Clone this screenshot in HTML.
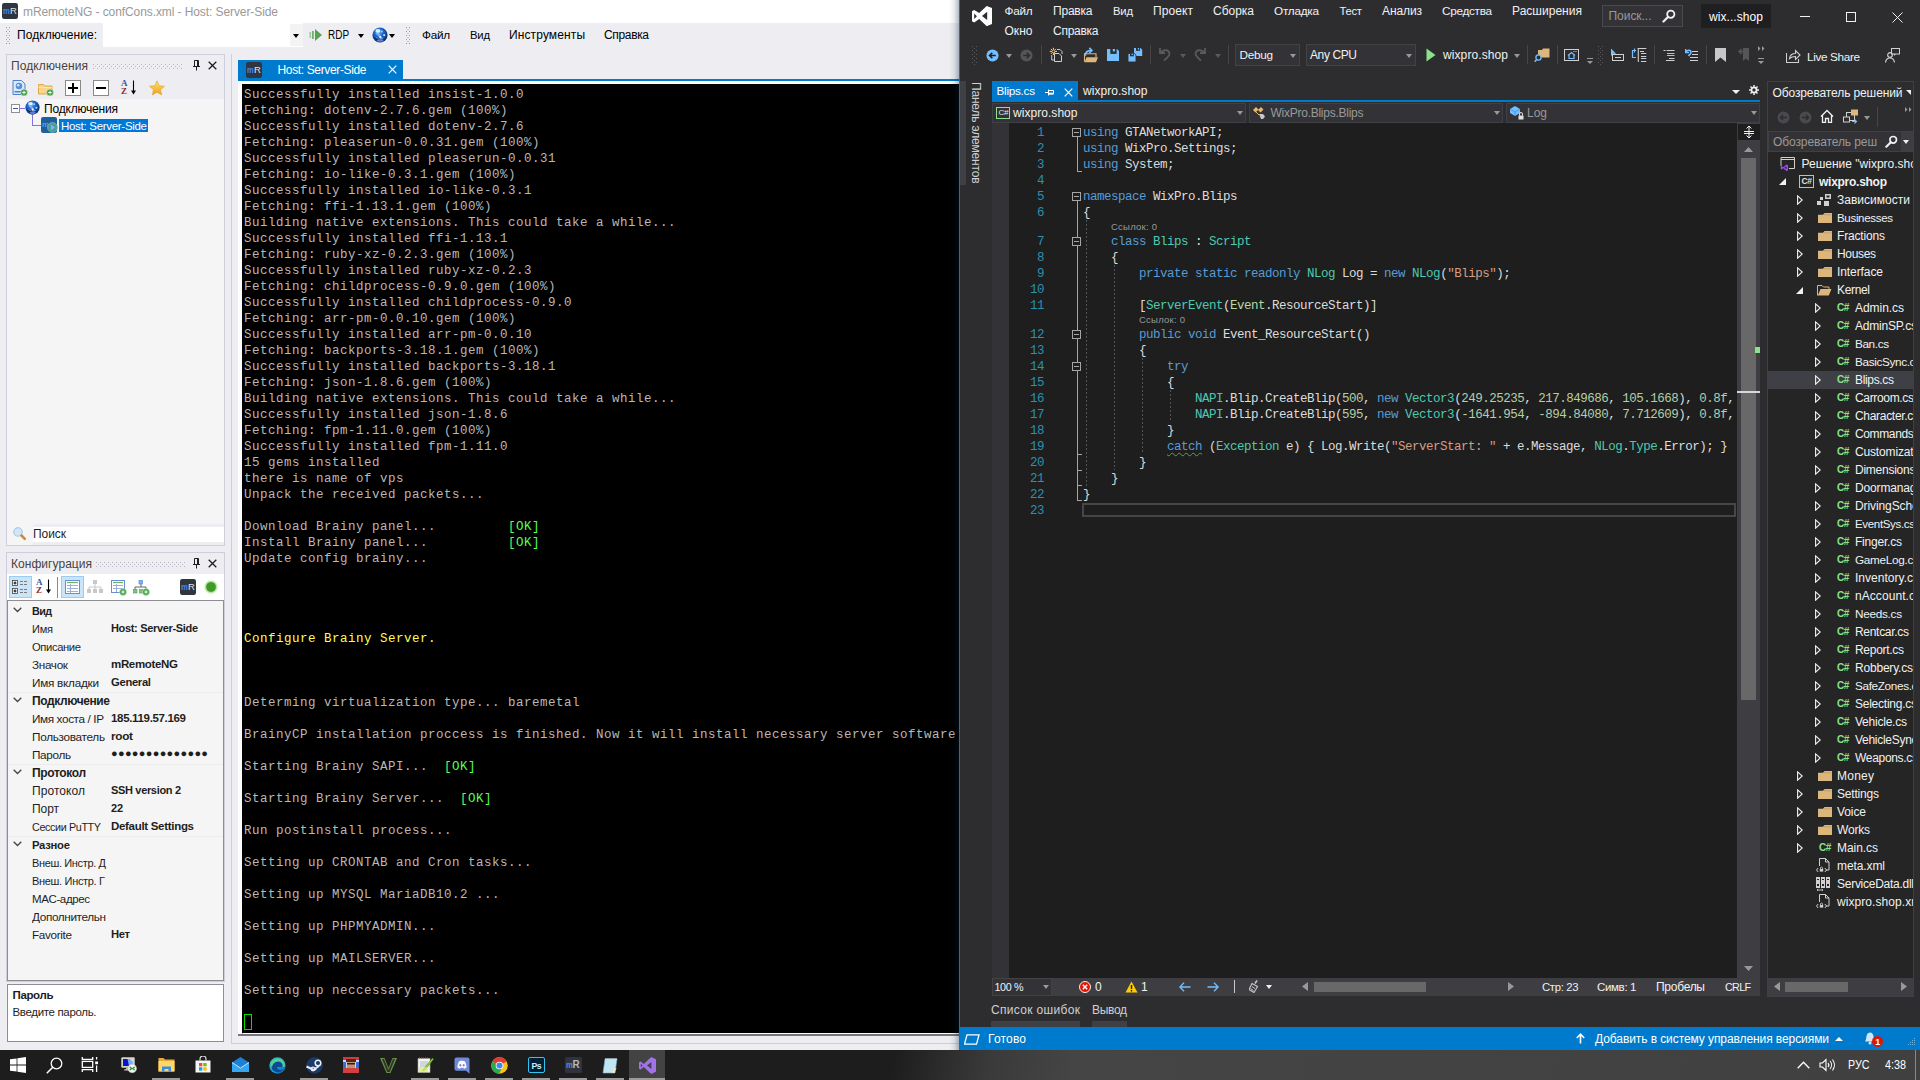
<!DOCTYPE html><html><head><meta charset="utf-8"><title>screen</title><style>
html,body{margin:0;padding:0;background:#2d2d30;overflow:hidden}
#r{position:relative;width:1920px;height:1080px;overflow:hidden;font-family:"Liberation Sans",sans-serif;font-size:12px}
#r div,#r span.t,#r svg,#r pre{position:absolute;box-sizing:border-box}
#r span.t{white-space:pre}
#r pre{margin:0}
#r pre b{font-weight:normal;color:#55ff55}
#r pre i{font-style:normal;color:#ffff55}
</style></head><body><div id="r">
<div style="left:0px;top:0px;width:959px;height:23px;background:#fff;"></div>
<div style="left:0px;top:23px;width:959px;height:1027px;background:#eeeef2;"></div>
<div style="left:2px;top:3px;width:16px;height:16px;background:#31353f;border-radius:2.2px"></div>
<span class="t" style="top:4px;font-size:9.5px;line-height:13px;color:#4a86f0;left:3.2px;font-weight:bold;transform:scaleX(.8);transform-origin:left;">m</span>
<span class="t" style="top:4px;font-size:9.5px;line-height:13px;color:#dfe3e8;left:9.9px;">R</span>
<span class="t" style="top:4px;font-size:12px;line-height:16px;color:#999;left:23px;letter-spacing:-0.087px;">mRemoteNG - confCons.xml - Host: Server-Side</span>
<div style="left:103px;top:23px;width:200px;height:24px;background:#fff;"></div>
<div style="left:290px;top:24px;width:13px;height:22px;background:#f3f3f4;"></div>
<svg style="left:6px;top:27px;" width="4" height="17" viewBox="0 0 4 17"><g fill="#9c9ca8"><rect x="0" y="0" width="1" height="1"/><rect x="3" y="0" width="1" height="1"/><rect x="1.500" y="2" width="1" height="1"/><rect x="0" y="4" width="1" height="1"/><rect x="3" y="4" width="1" height="1"/><rect x="1.500" y="6" width="1" height="1"/><rect x="0" y="8" width="1" height="1"/><rect x="3" y="8" width="1" height="1"/><rect x="1.500" y="10" width="1" height="1"/><rect x="0" y="12" width="1" height="1"/><rect x="3" y="12" width="1" height="1"/><rect x="1.500" y="14" width="1" height="1"/><rect x="0" y="16" width="1" height="1"/><rect x="3" y="16" width="1" height="1"/></g></svg>
<span class="t" style="top:27px;font-size:12px;line-height:16px;color:#000;left:17px;letter-spacing:0.053px;">Подключение:</span>
<div style="left:293px;top:34px;width:0;height:0;border-left:3.5px solid transparent;border-right:3.5px solid transparent;border-top:4px solid #000"></div>
<svg style="left:309px;top:28px;" width="14" height="14" viewBox="0 0 14 14"><rect x="0.5" y="4" width="1.6" height="6" fill="#9cc89c"/><rect x="3" y="3" width="1.8" height="8" fill="#6fb06f"/><path d="M6 1 L13 7 L6 13Z" fill="#57a257"/></svg>
<span class="t" style="top:27px;font-size:12px;line-height:16px;color:#000;left:327.5px;transform:scaleX(.83);transform-origin:left;">RDP</span>
<div style="left:358px;top:34px;width:0;height:0;border-left:3.5px solid transparent;border-right:3.5px solid transparent;border-top:4px solid #000"></div>
<svg style="left:372px;top:27px;" width="16" height="16" viewBox="0 0 16 16"><defs><radialGradient id="gg" cx="42%" cy="32%" r="68%"><stop offset="0" stop-color="#66aef2"/><stop offset="0.45" stop-color="#1864cc"/><stop offset="0.82" stop-color="#0c3c8a"/><stop offset="1" stop-color="#0a2858"/></radialGradient></defs><circle cx="8" cy="8" r="7.600" fill="url(#gg)"/><path d="M3.200 6.200C5.500 4.500 7.800 6.500 8.800 8.800C9.600 10.500 11 11 12 10.500C10.500 13 8 12.500 7 10.500C6 8.500 5 7.500 3.200 6.200Z" fill="#a8d4ff" opacity=".55"/><ellipse cx="5.900" cy="3.900" rx="2.500" ry="1.800" fill="#fff" opacity=".85"/><circle cx="9.800" cy="4.500" r="1" fill="#d4e8ff" opacity=".7"/><circle cx="12.200" cy="8.200" r="1.100" fill="#eef6ff" opacity=".8"/><circle cx="8.300" cy="10" r="1.100" fill="#fff" opacity=".9"/><path d="M1.800 10.500C3.500 10.300 5.500 11 7.500 12.300C6 13.500 3.500 13 1.800 10.500Z" fill="#06122c" opacity=".65"/><path d="M3.500 10.300L6.500 11.600" stroke="#c8d8f0" stroke-width="0.700" opacity=".7"/><ellipse cx="8.200" cy="13.500" rx="3.300" ry="1.300" fill="#8494ff" opacity=".7"/></svg>
<div style="left:389px;top:34px;width:0;height:0;border-left:3.5px solid transparent;border-right:3.5px solid transparent;border-top:4px solid #000"></div>
<svg style="left:406px;top:27px;" width="4" height="17" viewBox="0 0 4 17"><g fill="#9c9ca8"><rect x="0" y="0" width="1" height="1"/><rect x="3" y="0" width="1" height="1"/><rect x="1.500" y="2" width="1" height="1"/><rect x="0" y="4" width="1" height="1"/><rect x="3" y="4" width="1" height="1"/><rect x="1.500" y="6" width="1" height="1"/><rect x="0" y="8" width="1" height="1"/><rect x="3" y="8" width="1" height="1"/><rect x="1.500" y="10" width="1" height="1"/><rect x="0" y="12" width="1" height="1"/><rect x="3" y="12" width="1" height="1"/><rect x="1.500" y="14" width="1" height="1"/><rect x="0" y="16" width="1" height="1"/><rect x="3" y="16" width="1" height="1"/></g></svg>
<span class="t" style="top:27px;font-size:11.75px;line-height:15px;color:#000;left:422px;letter-spacing:-0.296px;">Файл</span>
<span class="t" style="top:28px;font-size:11.25px;line-height:14px;color:#000;left:470px;letter-spacing:-0.176px;">Вид</span>
<span class="t" style="top:27px;font-size:12px;line-height:16px;color:#000;left:509px;letter-spacing:0.118px;">Инструменты</span>
<span class="t" style="top:27px;font-size:12px;line-height:16px;color:#000;left:604px;letter-spacing:-0.346px;">Справка</span>
<div style="left:6px;top:54px;width:219px;height:492px;background:#eeeef2;border:1px solid #cccedb;"></div>
<span class="t" style="top:58px;font-size:12px;line-height:16px;color:#444;left:11px;letter-spacing:0.109px;">Подключения</span>
<svg style="left:93px;top:64px;" width="90" height="5" viewBox="0 0 90 5"><g fill="#b4b6c4"><rect x="0" y="0" width="1" height="1"/><rect x="4" y="0" width="1" height="1"/><rect x="8" y="0" width="1" height="1"/><rect x="12" y="0" width="1" height="1"/><rect x="16" y="0" width="1" height="1"/><rect x="20" y="0" width="1" height="1"/><rect x="24" y="0" width="1" height="1"/><rect x="28" y="0" width="1" height="1"/><rect x="32" y="0" width="1" height="1"/><rect x="36" y="0" width="1" height="1"/><rect x="40" y="0" width="1" height="1"/><rect x="44" y="0" width="1" height="1"/><rect x="48" y="0" width="1" height="1"/><rect x="52" y="0" width="1" height="1"/><rect x="56" y="0" width="1" height="1"/><rect x="60" y="0" width="1" height="1"/><rect x="64" y="0" width="1" height="1"/><rect x="68" y="0" width="1" height="1"/><rect x="72" y="0" width="1" height="1"/><rect x="76" y="0" width="1" height="1"/><rect x="80" y="0" width="1" height="1"/><rect x="84" y="0" width="1" height="1"/><rect x="88" y="0" width="1" height="1"/><rect x="2" y="2" width="1" height="1"/><rect x="6" y="2" width="1" height="1"/><rect x="10" y="2" width="1" height="1"/><rect x="14" y="2" width="1" height="1"/><rect x="18" y="2" width="1" height="1"/><rect x="22" y="2" width="1" height="1"/><rect x="26" y="2" width="1" height="1"/><rect x="30" y="2" width="1" height="1"/><rect x="34" y="2" width="1" height="1"/><rect x="38" y="2" width="1" height="1"/><rect x="42" y="2" width="1" height="1"/><rect x="46" y="2" width="1" height="1"/><rect x="50" y="2" width="1" height="1"/><rect x="54" y="2" width="1" height="1"/><rect x="58" y="2" width="1" height="1"/><rect x="62" y="2" width="1" height="1"/><rect x="66" y="2" width="1" height="1"/><rect x="70" y="2" width="1" height="1"/><rect x="74" y="2" width="1" height="1"/><rect x="78" y="2" width="1" height="1"/><rect x="82" y="2" width="1" height="1"/><rect x="86" y="2" width="1" height="1"/><rect x="0" y="4" width="1" height="1"/><rect x="4" y="4" width="1" height="1"/><rect x="8" y="4" width="1" height="1"/><rect x="12" y="4" width="1" height="1"/><rect x="16" y="4" width="1" height="1"/><rect x="20" y="4" width="1" height="1"/><rect x="24" y="4" width="1" height="1"/><rect x="28" y="4" width="1" height="1"/><rect x="32" y="4" width="1" height="1"/><rect x="36" y="4" width="1" height="1"/><rect x="40" y="4" width="1" height="1"/><rect x="44" y="4" width="1" height="1"/><rect x="48" y="4" width="1" height="1"/><rect x="52" y="4" width="1" height="1"/><rect x="56" y="4" width="1" height="1"/><rect x="60" y="4" width="1" height="1"/><rect x="64" y="4" width="1" height="1"/><rect x="68" y="4" width="1" height="1"/><rect x="72" y="4" width="1" height="1"/><rect x="76" y="4" width="1" height="1"/><rect x="80" y="4" width="1" height="1"/><rect x="84" y="4" width="1" height="1"/><rect x="88" y="4" width="1" height="1"/></g></svg>
<svg style="left:192px;top:60px;" width="9" height="11" viewBox="0 0 9 11"><path d="M2.5 0.5h4v6h-4z M1 6.5h7 M4.5 6.5v4" fill="none" stroke="#1e1e1e" stroke-width="1"/><rect x="5" y="1" width="1.5" height="5" fill="#1e1e1e"/></svg>
<svg style="left:208px;top:61px;" width="9" height="9" viewBox="0 0 9 9"><path d="M0.7 0.7L8.3 8.3M8.3 0.7L0.7 8.3" stroke="#1e1e1e" stroke-width="1.3" fill="none"/></svg>
<svg style="left:12px;top:80px;" width="16" height="16" viewBox="0 0 16 16"><path d="M1 0.5h8.5l3.5 3.5v10.5h-12z" fill="#dcebfb" stroke="#4a7fd0"/><rect x="2.5" y="11" width="7" height="1.5" fill="#4a7fd0"/><circle cx="7" cy="6" r="3.3" fill="#5b8fd8"/><circle cx="6.2" cy="5.2" r="1.3" fill="#cfe2fa"/><circle cx="12" cy="12.5" r="3.5" fill="#43a143" stroke="#d8efd8" stroke-width="0.6"/><path d="M10.2 12.5h3.6M12 10.7v3.6" stroke="#fff" stroke-width="0.9"/></svg>
<svg style="left:38px;top:80px;" width="16" height="16" viewBox="0 0 16 16"><path d="M0.5 4.5h5l1.5 1.5h7v8h-13.5z" fill="#f7d58b" stroke="#e0a84a"/><path d="M0.5 7.5h13.5" stroke="#fbe8b8"/><circle cx="12" cy="12.5" r="3.5" fill="#43a143" stroke="#d8efd8" stroke-width="0.6"/><path d="M10.2 12.5h3.6M12 10.7v3.6" stroke="#fff" stroke-width="0.9"/></svg>
<div style="left:65px;top:80px;width:16px;height:16px;background:#fff;border:1px solid #8a8a8a;"></div>
<div style="left:68px;top:87px;width:10px;height:2px;background:#000;"></div>
<div style="left:72px;top:83px;width:2px;height:10px;background:#000;"></div>
<div style="left:93px;top:80px;width:16px;height:16px;background:#fff;border:1px solid #8a8a8a;"></div>
<div style="left:96px;top:87px;width:10px;height:2px;background:#000;"></div>
<span class="t" style="left:121px;top:79px;font:bold 9px/9px 'Liberation Serif',serif;color:#3953a4">A</span>
<span class="t" style="left:121px;top:87px;font:bold 9px/9px 'Liberation Serif',serif;color:#8c2a2a">Z</span>
<svg style="left:130px;top:80px;" width="7" height="16" viewBox="0 0 7 16"><path d="M3.5 0.5v12" stroke="#000" stroke-width="1.1"/><path d="M1 10.5L3.5 14.5L6 10.5Z" fill="#000"/></svg>
<svg style="left:149px;top:80px;" width="16" height="16" viewBox="0 0 16 16"><defs><linearGradient id="sg" x1="0" y1="0" x2="0" y2="1"><stop offset="0" stop-color="#ffe36a"/><stop offset="1" stop-color="#e9a21a"/></linearGradient></defs><path d="M8 0.8l2.2 4.9 5.3 0.5-4 3.6 1.2 5.2-4.7-2.8-4.7 2.8 1.2-5.2-4-3.6 5.3-0.5z" fill="url(#sg)" stroke="#e0a030" stroke-width="0.6"/></svg>
<div style="left:7px;top:99px;width:217px;height:446px;background:#f5f5f5;"></div>
<div style="left:11px;top:104px;width:9px;height:9px;background:#fff;border:1px solid #919191;"></div>
<div style="left:13px;top:108px;width:5px;height:1px;background:#3a55a5;"></div>
<div style="left:20px;top:108px;width:5px;height:1px;background:#8470e8;"></div>
<div style="left:32px;top:115px;width:1px;height:10px;background:#8470e8;"></div>
<div style="left:32px;top:125px;width:9px;height:1px;background:#8470e8;"></div>
<svg style="left:25px;top:100px;" width="15" height="15" viewBox="0 0 16 16"><defs><radialGradient id="gg" cx="42%" cy="32%" r="68%"><stop offset="0" stop-color="#66aef2"/><stop offset="0.45" stop-color="#1864cc"/><stop offset="0.82" stop-color="#0c3c8a"/><stop offset="1" stop-color="#0a2858"/></radialGradient></defs><circle cx="8" cy="8" r="7.600" fill="url(#gg)"/><path d="M3.200 6.200C5.500 4.500 7.800 6.500 8.800 8.800C9.600 10.500 11 11 12 10.500C10.500 13 8 12.500 7 10.500C6 8.500 5 7.500 3.200 6.200Z" fill="#a8d4ff" opacity=".55"/><ellipse cx="5.900" cy="3.900" rx="2.500" ry="1.800" fill="#fff" opacity=".85"/><circle cx="9.800" cy="4.500" r="1" fill="#d4e8ff" opacity=".7"/><circle cx="12.200" cy="8.200" r="1.100" fill="#eef6ff" opacity=".8"/><circle cx="8.300" cy="10" r="1.100" fill="#fff" opacity=".9"/><path d="M1.800 10.500C3.500 10.300 5.500 11 7.500 12.300C6 13.500 3.500 13 1.800 10.500Z" fill="#06122c" opacity=".65"/><path d="M3.500 10.300L6.500 11.600" stroke="#c8d8f0" stroke-width="0.700" opacity=".7"/><ellipse cx="8.200" cy="13.500" rx="3.300" ry="1.300" fill="#8494ff" opacity=".7"/></svg>
<span class="t" style="top:101px;font-size:12px;line-height:16px;color:#000;left:44px;letter-spacing:-0.191px;">Подключения</span>
<div style="left:41px;top:117px;width:16px;height:16px;background:#1f5f9e;border-radius:2px;"></div>
<span class="t" style="left:42px;top:120px;font-size:8px;line-height:9px;color:#4aa3f0;font-weight:bold">m</span>
<svg style="left:47px;top:122px;" width="11" height="11" viewBox="0 0 11 11"><circle cx="5.5" cy="5.5" r="5" fill="#4f9c9c" stroke="#7fc0c0" stroke-width="0.6"/><path d="M4 2.8L8 5.5L4 8.2Z" fill="#7fb6ee"/></svg>
<div style="left:59px;top:119px;width:89px;height:13px;background:#0078d7;"></div>
<span class="t" style="top:119px;font-size:11.5px;line-height:14px;color:#fff;left:61px;letter-spacing:-0.297px;">Host: Server-Side</span>
<svg style="left:13px;top:527px;" width="14" height="14" viewBox="0 0 14 14"><circle cx="5" cy="5" r="4.200" fill="#d2e6f8" stroke="#9cc4ea" stroke-width="1.100"/><path d="M8.500 8.500L11.800 11.800" stroke="#d08a3a" stroke-width="2.600" stroke-linecap="round"/></svg>
<div style="left:33px;top:524px;width:191px;height:21px;background:#eeeef2;"></div>
<div style="left:33px;top:527px;width:191px;height:15px;background:#fff;"></div>
<span class="t" style="top:526px;font-size:12px;line-height:16px;color:#1e1e1e;left:33px;letter-spacing:-0.063px;">Поиск</span>
<div style="left:6px;top:552px;width:219px;height:430px;background:#eeeef2;border:1px solid #cccedb;"></div>
<span class="t" style="top:556px;font-size:12px;line-height:16px;color:#444;left:11px;letter-spacing:0.043px;">Конфигурация</span>
<svg style="left:96px;top:562px;" width="90" height="5" viewBox="0 0 90 5"><g fill="#b4b6c4"><rect x="0" y="0" width="1" height="1"/><rect x="4" y="0" width="1" height="1"/><rect x="8" y="0" width="1" height="1"/><rect x="12" y="0" width="1" height="1"/><rect x="16" y="0" width="1" height="1"/><rect x="20" y="0" width="1" height="1"/><rect x="24" y="0" width="1" height="1"/><rect x="28" y="0" width="1" height="1"/><rect x="32" y="0" width="1" height="1"/><rect x="36" y="0" width="1" height="1"/><rect x="40" y="0" width="1" height="1"/><rect x="44" y="0" width="1" height="1"/><rect x="48" y="0" width="1" height="1"/><rect x="52" y="0" width="1" height="1"/><rect x="56" y="0" width="1" height="1"/><rect x="60" y="0" width="1" height="1"/><rect x="64" y="0" width="1" height="1"/><rect x="68" y="0" width="1" height="1"/><rect x="72" y="0" width="1" height="1"/><rect x="76" y="0" width="1" height="1"/><rect x="80" y="0" width="1" height="1"/><rect x="84" y="0" width="1" height="1"/><rect x="88" y="0" width="1" height="1"/><rect x="2" y="2" width="1" height="1"/><rect x="6" y="2" width="1" height="1"/><rect x="10" y="2" width="1" height="1"/><rect x="14" y="2" width="1" height="1"/><rect x="18" y="2" width="1" height="1"/><rect x="22" y="2" width="1" height="1"/><rect x="26" y="2" width="1" height="1"/><rect x="30" y="2" width="1" height="1"/><rect x="34" y="2" width="1" height="1"/><rect x="38" y="2" width="1" height="1"/><rect x="42" y="2" width="1" height="1"/><rect x="46" y="2" width="1" height="1"/><rect x="50" y="2" width="1" height="1"/><rect x="54" y="2" width="1" height="1"/><rect x="58" y="2" width="1" height="1"/><rect x="62" y="2" width="1" height="1"/><rect x="66" y="2" width="1" height="1"/><rect x="70" y="2" width="1" height="1"/><rect x="74" y="2" width="1" height="1"/><rect x="78" y="2" width="1" height="1"/><rect x="82" y="2" width="1" height="1"/><rect x="86" y="2" width="1" height="1"/><rect x="0" y="4" width="1" height="1"/><rect x="4" y="4" width="1" height="1"/><rect x="8" y="4" width="1" height="1"/><rect x="12" y="4" width="1" height="1"/><rect x="16" y="4" width="1" height="1"/><rect x="20" y="4" width="1" height="1"/><rect x="24" y="4" width="1" height="1"/><rect x="28" y="4" width="1" height="1"/><rect x="32" y="4" width="1" height="1"/><rect x="36" y="4" width="1" height="1"/><rect x="40" y="4" width="1" height="1"/><rect x="44" y="4" width="1" height="1"/><rect x="48" y="4" width="1" height="1"/><rect x="52" y="4" width="1" height="1"/><rect x="56" y="4" width="1" height="1"/><rect x="60" y="4" width="1" height="1"/><rect x="64" y="4" width="1" height="1"/><rect x="68" y="4" width="1" height="1"/><rect x="72" y="4" width="1" height="1"/><rect x="76" y="4" width="1" height="1"/><rect x="80" y="4" width="1" height="1"/><rect x="84" y="4" width="1" height="1"/><rect x="88" y="4" width="1" height="1"/></g></svg>
<svg style="left:192px;top:558px;" width="9" height="11" viewBox="0 0 9 11"><path d="M2.5 0.5h4v6h-4z M1 6.5h7 M4.5 6.5v4" fill="none" stroke="#1e1e1e" stroke-width="1"/><rect x="5" y="1" width="1.5" height="5" fill="#1e1e1e"/></svg>
<svg style="left:208px;top:559px;" width="9" height="9" viewBox="0 0 9 9"><path d="M0.7 0.7L8.3 8.3M8.3 0.7L0.7 8.3" stroke="#1e1e1e" stroke-width="1.3" fill="none"/></svg>
<div style="left:7px;top:574px;width:217px;height:26px;background:#fff;"></div>
<div style="left:9px;top:576px;width:23px;height:22px;background:#cce4f7;border:1px solid #99cdf3;"></div>
<svg style="left:12px;top:579px;" width="17" height="16" viewBox="0 0 17 16"><g fill="#fff" stroke="#444" stroke-width="0.8"><rect x="0.5" y="1.5" width="5" height="5"/><rect x="0.5" y="9.5" width="5" height="5"/></g><path d="M1.5 4h3M3 2.5v3M1.5 12h3M3 10.5v3" stroke="#000" stroke-width="1"/><g stroke="#7a7a7a" stroke-width="1" stroke-dasharray="3 1"><path d="M8 2.5h8M8 5.5h8M8 10.5h8M8 13.5h8"/></g></svg>
<span class="t" style="left:36px;top:578px;font:bold 9px/9px 'Liberation Serif',serif;color:#3953a4">A</span>
<span class="t" style="left:36px;top:586px;font:bold 9px/9px 'Liberation Serif',serif;color:#8c2a2a">Z</span>
<svg style="left:45px;top:579px;" width="7" height="16" viewBox="0 0 7 16"><path d="M3.5 0.5v12" stroke="#000" stroke-width="1.1"/><path d="M1 10.5L3.5 14.5L6 10.5Z" fill="#000"/></svg>
<div style="left:57px;top:577px;width:1px;height:21px;background:#8a8a8a;"></div>
<div style="left:61px;top:576px;width:23px;height:22px;background:#cce4f7;border:1px solid #99cdf3;"></div>
<svg style="left:65px;top:580px;" width="15" height="14" viewBox="0 0 15 14"><rect x="0.5" y="0.5" width="14" height="13" fill="#fff" stroke="#6a8fd0"/><path d="M2 2.5h11" stroke="#6db36d" stroke-width="1.2"/><g stroke="#9ab0d8" stroke-width="1"><path d="M2 5.5h11M2 8.5h11M2 11.5h11M5.5 4v9"/></g></svg>
<svg style="left:87px;top:580px;" width="16" height="14" viewBox="0 0 16 14"><g fill="#c8c8c8"><rect x="6" y="0" width="4" height="4"/><rect x="0" y="9" width="4" height="4"/><rect x="6" y="9" width="4" height="4"/><rect x="12" y="9" width="4" height="4"/></g><path d="M8 4v3M2 9V7h12v2M8 7v2" stroke="#c8c8c8" fill="none"/></svg>
<svg style="left:111px;top:580px;" width="16" height="16" viewBox="0 0 16 16"><rect x="0.5" y="0.5" width="13" height="12" fill="#fff" stroke="#6a8fd0"/><path d="M2 2.5h10" stroke="#6db36d" stroke-width="1.2"/><g stroke="#9ab0d8" stroke-width="1"><path d="M2 5.5h10M2 8.5h10M5.5 4v8"/></g><circle cx="12" cy="12" r="3.5" fill="#43a143" stroke="#d8efd8" stroke-width="0.6"/><path d="M10.2 12h3.6M12 10.2v3.6" stroke="#fff" stroke-width="0.9"/></svg>
<svg style="left:133px;top:580px;" width="17" height="16" viewBox="0 0 17 16"><rect x="6" y="0.5" width="3.5" height="3.5" fill="#7fb0ee" stroke="#4a7fd0" stroke-width="0.6"/><g fill="#7fc47f" stroke="#4aa04a" stroke-width="0.6"><rect x="0.5" y="9.5" width="3.5" height="3.5"/><rect x="6.5" y="9.5" width="3.5" height="3.5"/></g><path d="M8 4v3M2 9.5V7h11v2" stroke="#666" fill="none"/><circle cx="13" cy="12" r="3.5" fill="#43a143" stroke="#d8efd8" stroke-width="0.6"/><path d="M11.2 12h3.6M13 10.2v3.6" stroke="#fff" stroke-width="0.9"/></svg>
<div style="left:180px;top:579px;width:16px;height:16px;background:#31353f;border-radius:2.2px"></div>
<span class="t" style="top:580px;font-size:9.5px;line-height:13px;color:#4a86f0;left:181.2px;font-weight:bold;transform:scaleX(.8);transform-origin:left;">m</span>
<span class="t" style="top:580px;font-size:9.5px;line-height:13px;color:#dfe3e8;left:187.9px;">R</span>
<svg style="left:203px;top:579px;" width="16" height="16" viewBox="0 0 16 16"><defs><radialGradient id="gd"><stop offset="0.6" stop-color="#7fcf5a"/><stop offset="1" stop-color="#b8e8a0" stop-opacity="0"/></radialGradient></defs><circle cx="8" cy="8" r="7.5" fill="url(#gd)"/><circle cx="8" cy="8" r="4.8" fill="#3f9a2a"/></svg>
<div style="left:7px;top:600px;width:217px;height:381px;background:#f5f5f5;border:1px solid #8c8e94;"></div>
<svg style="left:13px;top:607px;" width="9" height="6" viewBox="0 0 9 6"><path d="M0.7 0.7L4.5 4.5L8.3 0.7" fill="none" stroke="#444" stroke-width="1.3"/></svg>
<span class="t" style="top:604px;font-size:10.75px;line-height:14px;color:#1e1e1e;left:32px;font-weight:bold;letter-spacing:-0.598px;">Вид</span>
<div style="left:32px;top:620px;width:75px;height:18px;overflow:hidden">
<span class="t" style="top:2px;font-size:11.0px;line-height:14px;color:#1e1e1e;left:0px;letter-spacing:-0.213px;">Имя</span>
</div>
<span class="t" style="top:621px;font-size:11.0px;line-height:14px;color:#1e1e1e;left:111px;font-weight:bold;letter-spacing:-0.331px;">Host: Server-Side</span>
<div style="left:32px;top:638px;width:75px;height:18px;overflow:hidden">
<span class="t" style="top:2px;font-size:11.25px;line-height:14px;color:#1e1e1e;left:0px;letter-spacing:-0.394px;">Описание</span>
</div>
<div style="left:32px;top:656px;width:75px;height:18px;overflow:hidden">
<span class="t" style="top:1px;font-size:11.75px;line-height:15px;color:#1e1e1e;left:0px;letter-spacing:-0.331px;">Значок</span>
</div>
<span class="t" style="top:657px;font-size:11.5px;line-height:14px;color:#1e1e1e;left:111px;font-weight:bold;letter-spacing:-0.331px;">mRemoteNG</span>
<div style="left:32px;top:674px;width:75px;height:18px;overflow:hidden">
<span class="t" style="top:1px;font-size:11.75px;line-height:15px;color:#1e1e1e;left:0px;letter-spacing:-0.262px;">Имя вкладки</span>
</div>
<span class="t" style="top:675px;font-size:11.25px;line-height:14px;color:#1e1e1e;left:111px;font-weight:bold;letter-spacing:-0.316px;">General</span>
<div style="left:8px;top:692px;width:215px;height:1px;background:#ececec;"></div>
<svg style="left:13px;top:697px;" width="9" height="6" viewBox="0 0 9 6"><path d="M0.7 0.7L4.5 4.5L8.3 0.7" fill="none" stroke="#444" stroke-width="1.3"/></svg>
<span class="t" style="top:693px;font-size:12px;line-height:16px;color:#1e1e1e;left:32px;font-weight:bold;letter-spacing:-0.392px;">Подключение</span>
<div style="left:32px;top:710px;width:75px;height:18px;overflow:hidden">
<span class="t" style="top:1px;font-size:11.75px;line-height:15px;color:#1e1e1e;left:0px;letter-spacing:-0.383px;">Имя хоста / IP</span>
</div>
<span class="t" style="top:711px;font-size:11.5px;line-height:14px;color:#1e1e1e;left:111px;font-weight:bold;letter-spacing:-0.330px;">185.119.57.169</span>
<div style="left:32px;top:728px;width:75px;height:18px;overflow:hidden">
<span class="t" style="top:1px;font-size:11.75px;line-height:15px;color:#1e1e1e;left:0px;letter-spacing:-0.295px;">Пользователь</span>
</div>
<span class="t" style="top:728px;font-size:11.75px;line-height:15px;color:#1e1e1e;left:111px;font-weight:bold;letter-spacing:-0.280px;">root</span>
<div style="left:32px;top:746px;width:75px;height:18px;overflow:hidden">
<span class="t" style="top:1px;font-size:11.75px;line-height:15px;color:#1e1e1e;left:0px;letter-spacing:-0.353px;">Пароль</span>
</div>
<span class="t" style="top:746px;font-size:11px;line-height:14px;color:#1e1e1e;left:111px;letter-spacing:0.306px;">●●●●●●●●●●●●●●</span>
<div style="left:8px;top:764px;width:215px;height:1px;background:#ececec;"></div>
<svg style="left:13px;top:769px;" width="9" height="6" viewBox="0 0 9 6"><path d="M0.7 0.7L4.5 4.5L8.3 0.7" fill="none" stroke="#444" stroke-width="1.3"/></svg>
<span class="t" style="top:765px;font-size:12px;line-height:16px;color:#1e1e1e;left:32px;font-weight:bold;letter-spacing:-0.362px;">Протокол</span>
<div style="left:32px;top:782px;width:75px;height:18px;overflow:hidden">
<span class="t" style="top:1px;font-size:12px;line-height:16px;color:#1e1e1e;left:0px;letter-spacing:0.066px;">Протокол</span>
</div>
<span class="t" style="top:783px;font-size:11.0px;line-height:14px;color:#1e1e1e;left:111px;font-weight:bold;letter-spacing:-0.331px;">SSH version 2</span>
<div style="left:32px;top:800px;width:75px;height:18px;overflow:hidden">
<span class="t" style="top:1px;font-size:12px;line-height:16px;color:#1e1e1e;left:0px;letter-spacing:-0.068px;">Порт</span>
</div>
<span class="t" style="top:801px;font-size:11.0px;line-height:14px;color:#1e1e1e;left:111px;font-weight:bold;letter-spacing:-0.234px;">22</span>
<div style="left:32px;top:818px;width:75px;height:18px;overflow:hidden">
<span class="t" style="top:2px;font-size:10.75px;line-height:14px;color:#1e1e1e;left:0px;letter-spacing:-0.358px;">Сессии PuTTY</span>
</div>
<span class="t" style="top:819px;font-size:11.5px;line-height:14px;color:#1e1e1e;left:111px;font-weight:bold;letter-spacing:-0.302px;">Default Settings</span>
<div style="left:8px;top:836px;width:215px;height:1px;background:#ececec;"></div>
<svg style="left:13px;top:841px;" width="9" height="6" viewBox="0 0 9 6"><path d="M0.7 0.7L4.5 4.5L8.3 0.7" fill="none" stroke="#444" stroke-width="1.3"/></svg>
<span class="t" style="top:838px;font-size:11.25px;line-height:14px;color:#1e1e1e;left:32px;font-weight:bold;letter-spacing:-0.253px;">Разное</span>
<div style="left:32px;top:854px;width:75px;height:18px;overflow:hidden">
<span class="t" style="top:2px;font-size:11.0px;line-height:14px;color:#1e1e1e;left:0px;letter-spacing:-0.358px;">Внеш. Инстр. Д</span>
</div>
<div style="left:32px;top:872px;width:75px;height:18px;overflow:hidden">
<span class="t" style="top:2px;font-size:11.0px;line-height:14px;color:#1e1e1e;left:0px;letter-spacing:-0.321px;">Внеш. Инстр. Г</span>
</div>
<div style="left:32px;top:890px;width:75px;height:18px;overflow:hidden">
<span class="t" style="top:2px;font-size:11.5px;line-height:14px;color:#1e1e1e;left:0px;letter-spacing:-0.379px;">MAC-адрес</span>
</div>
<div style="left:32px;top:908px;width:75px;height:18px;overflow:hidden">
<span class="t" style="top:1px;font-size:11.75px;line-height:15px;color:#1e1e1e;left:0px;letter-spacing:-0.366px;">Дополнительн</span>
</div>
<div style="left:32px;top:926px;width:75px;height:18px;overflow:hidden">
<span class="t" style="top:1px;font-size:11.75px;line-height:15px;color:#1e1e1e;left:0px;letter-spacing:-0.349px;">Favorite</span>
</div>
<span class="t" style="top:927px;font-size:11.25px;line-height:14px;color:#1e1e1e;left:111px;font-weight:bold;letter-spacing:-0.371px;">Нет</span>
<div style="left:7px;top:984px;width:217px;height:58px;background:#fff;border:1px solid #8c8e94;"></div>
<span class="t" style="top:988px;font-size:11.5px;line-height:14px;color:#1e1e1e;left:12.5px;font-weight:bold;letter-spacing:-0.360px;">Пароль</span>
<span class="t" style="top:1005px;font-size:11.5px;line-height:14px;color:#1e1e1e;left:12.5px;letter-spacing:-0.336px;">Введите пароль.</span>
<div style="left:231px;top:54px;width:1px;height:990px;background:#cccedb;"></div>
<div style="left:232px;top:1043px;width:727px;height:1px;background:#cccedb;"></div>
<div style="left:238px;top:60px;width:165px;height:21px;background:#007acc;"></div>
<div style="left:246px;top:62px;width:16px;height:16px;background:#31353f;border-radius:2.2px"></div>
<span class="t" style="top:63px;font-size:9.5px;line-height:13px;color:#4a86f0;left:247.2px;font-weight:bold;transform:scaleX(.8);transform-origin:left;">m</span>
<span class="t" style="top:63px;font-size:9.5px;line-height:13px;color:#dfe3e8;left:253.9px;">R</span>
<span class="t" style="top:62px;font-size:12px;line-height:16px;color:#fff;left:277.5px;letter-spacing:-0.356px;">Host: Server-Side</span>
<svg style="left:388px;top:65px;" width="9" height="9" viewBox="0 0 9 9"><path d="M0.7 0.7L8.3 8.3M8.3 0.7L0.7 8.3" stroke="#fff" stroke-width="1.2" fill="none"/></svg>
<div style="left:238px;top:79px;width:721px;height:2px;background:#007acc;"></div>
<div style="left:238px;top:81px;width:721px;height:3px;background:#fdfdfd;"></div>
<div style="left:238px;top:81px;width:4px;height:954px;background:#fdfdfd;"></div>
<div style="left:242px;top:1033px;width:717px;height:1px;background:#fdfdfd;"></div>
<div style="left:238px;top:1034px;width:721px;height:1.5px;background:#777;"></div>
<div style="left:232px;top:1043px;width:727px;height:1px;background:#cccedb;"></div>
<div style="left:241.5px;top:83.5px;width:1px;height:950px;background:#b0b0b0;"></div>
<div style="left:242px;top:84px;width:717px;height:949px;background:#000;"></div>
<pre style="left:244px;top:87px;font-family:'Liberation Mono',monospace;font-size:12.5px;letter-spacing:0.5px;line-height:16px;color:#b8b8b8">Successfully installed insist-1.0.0
Fetching: dotenv-2.7.6.gem (100%)
Successfully installed dotenv-2.7.6
Fetching: pleaserun-0.0.31.gem (100%)
Successfully installed pleaserun-0.0.31
Fetching: io-like-0.3.1.gem (100%)
Successfully installed io-like-0.3.1
Fetching: ffi-1.13.1.gem (100%)
Building native extensions. This could take a while...
Successfully installed ffi-1.13.1
Fetching: ruby-xz-0.2.3.gem (100%)
Successfully installed ruby-xz-0.2.3
Fetching: childprocess-0.9.0.gem (100%)
Successfully installed childprocess-0.9.0
Fetching: arr-pm-0.0.10.gem (100%)
Successfully installed arr-pm-0.0.10
Fetching: backports-3.18.1.gem (100%)
Successfully installed backports-3.18.1
Fetching: json-1.8.6.gem (100%)
Building native extensions. This could take a while...
Successfully installed json-1.8.6
Fetching: fpm-1.11.0.gem (100%)
Successfully installed fpm-1.11.0
15 gems installed
there is name of vps
Unpack the received packets...

Download Brainy panel...         <b>[OK]</b>
Install Brainy panel...          <b>[OK]</b>
Update config brainy...




<i>Configure Brainy Server.</i>



Determing virtualization type... baremetal

BrainyCP installation proccess is finished. Now it will install necessary server software

Starting Brainy SAPI...  <b>[OK]</b>

Starting Brainy Server...  <b>[OK]</b>

Run postinstall process...

Setting up CRONTAB and Cron tasks...

Setting up MYSQL MariaDB10.2 ...

Setting up PHPMYADMIN...

Setting up MAILSERVER...

Setting up neccessary packets...</pre>
<div style="left:244px;top:1014px;width:8px;height:16px;border:1px solid #00e000;"></div>
<div style="left:949px;top:0px;width:10px;height:1050px;background:linear-gradient(90deg,rgba(0,30,60,0) 0,rgba(0,30,60,.08) 50%,rgba(0,30,60,.3) 100%);"></div>
<div style="left:959px;top:0px;width:1px;height:1050px;background:#007acc;"></div>
<div style="left:960px;top:0px;width:960px;height:1050px;background:#2d2d30;"></div>
<svg style="left:971.8px;top:5.8px;" width="20.2" height="20.2" viewBox="0 0 20.2 20.2"><path d="M14.7 0L20.2 2.2V18L14.7 20.2L7.2 13.1L2.2 16.4L0 15.2V5.2L2.2 4.1L7.2 7.1Z M15.2 5.8L10 10.1L15.2 14Z M2.2 7.5V13.1L4.9 10.2Z" fill="#fff" fill-rule="evenodd"/></svg>
<span class="t" style="top:3px;font-size:11.75px;line-height:15px;color:#f1f1f1;left:1004.5px;letter-spacing:-0.296px;">Файл</span>
<span class="t" style="top:3px;font-size:12px;line-height:16px;color:#f1f1f1;left:1053px;letter-spacing:-0.207px;">Правка</span>
<span class="t" style="top:4px;font-size:11.25px;line-height:14px;color:#f1f1f1;left:1113px;letter-spacing:-0.176px;">Вид</span>
<span class="t" style="top:3px;font-size:12px;line-height:16px;color:#f1f1f1;left:1153px;letter-spacing:0.095px;">Проект</span>
<span class="t" style="top:3px;font-size:12px;line-height:16px;color:#f1f1f1;left:1213px;letter-spacing:-0.015px;">Сборка</span>
<span class="t" style="top:3px;font-size:11.75px;line-height:15px;color:#f1f1f1;left:1274px;letter-spacing:-0.240px;">Отладка</span>
<span class="t" style="top:4px;font-size:11.25px;line-height:14px;color:#f1f1f1;left:1339.5px;letter-spacing:-0.258px;">Тест</span>
<span class="t" style="top:3px;font-size:12px;line-height:16px;color:#f1f1f1;left:1382px;letter-spacing:-0.102px;">Анализ</span>
<span class="t" style="top:3px;font-size:11.75px;line-height:15px;color:#f1f1f1;left:1442px;letter-spacing:-0.293px;">Средства</span>
<span class="t" style="top:3px;font-size:12px;line-height:16px;color:#f1f1f1;left:1512px;letter-spacing:0.024px;">Расширения</span>
<span class="t" style="top:23px;font-size:12px;line-height:16px;color:#f1f1f1;left:1004.5px;letter-spacing:0.039px;">Окно</span>
<span class="t" style="top:23px;font-size:12px;line-height:16px;color:#f1f1f1;left:1053px;letter-spacing:-0.262px;">Справка</span>
<div style="left:1602px;top:5px;width:81px;height:22px;background:#333337;border:1px solid #4a4a4e;"></div>
<span class="t" style="top:8px;font-size:12px;line-height:16px;color:#999;left:1608.5px;letter-spacing:-0.036px;">Поиск...</span>
<svg style="left:1662px;top:9px;" width="14" height="14" viewBox="0 0 14 14"><circle cx="8.8" cy="5.2" r="3.6" fill="none" stroke="#f1f1f1" stroke-width="1.8"/><path d="M6.2 7.8L1.5 12.5" stroke="#f1f1f1" stroke-width="2.2" stroke-linecap="round"/></svg>
<div style="left:1701px;top:4px;width:70px;height:24px;background:#1f1f22;"></div>
<span class="t" style="top:9px;font-size:12px;line-height:16px;color:#fff;left:1709px;letter-spacing:0.072px;">wix...shop</span>
<div style="left:1800px;top:16px;width:10px;height:1px;background:#f1f1f1;"></div>
<div style="left:1846px;top:12px;width:10px;height:10px;border:1px solid #f1f1f1;"></div>
<svg style="left:1892px;top:12px;" width="11" height="11" viewBox="0 0 11 11"><path d="M0.5 0.5L10.5 10.5M10.5 0.5L0.5 10.5" stroke="#f1f1f1" stroke-width="1"/></svg>
<svg style="left:972px;top:46px;" width="5" height="19" viewBox="0 0 5 19"><g fill="#5a5a5e"><rect x="0" y="0" width="1" height="1"/><rect x="2" y="2" width="1" height="1"/><rect x="4" y="0" width="1" height="1"/><rect x="0" y="4" width="1" height="1"/><rect x="2" y="6" width="1" height="1"/><rect x="4" y="4" width="1" height="1"/><rect x="0" y="8" width="1" height="1"/><rect x="2" y="10" width="1" height="1"/><rect x="4" y="8" width="1" height="1"/><rect x="0" y="12" width="1" height="1"/><rect x="2" y="14" width="1" height="1"/><rect x="4" y="12" width="1" height="1"/><rect x="0" y="16" width="1" height="1"/><rect x="2" y="18" width="1" height="1"/><rect x="4" y="16" width="1" height="1"/></g></svg>
<svg style="left:985.5px;top:48.5px;" width="13" height="13" viewBox="0 0 14 14"><circle cx="7" cy="7" r="6.5" fill="#75beff"/><path d="M10.5 7H4M6.8 4L3.8 7L6.8 10" fill="none" stroke="#1e1e1e" stroke-width="1.7"/></svg>
<div style="left:1005.5px;top:54px;width:0;height:0;border-left:3.5px solid transparent;border-right:3.5px solid transparent;border-top:4px solid #999"></div>
<svg style="left:1020px;top:48.5px;" width="13" height="13" viewBox="0 0 14 14"><circle cx="7" cy="7" r="6.5" fill="#555558"/><path d="M3.5 7H10M7.2 4L10.2 7L7.2 10" fill="none" stroke="#2d2d30" stroke-width="1.7"/></svg>
<div style="left:1041px;top:45px;width:1px;height:19px;background:#46464a;"></div>
<svg style="left:1049px;top:47px;" width="16" height="16" viewBox="0 0 16 16"><path d="M8 2.500h3l2 2v2.500M2.700 8v5h2.500" fill="none" stroke="#c8c8c8"/><path d="M5.500 6.500h4.500l2.500 2.500v5.500h-7z" fill="#2d2d30" stroke="#d0d0d0"/><path d="M4.400 0.800v7.200M0.800 4.400h7.200M1.900 1.900l5 5M6.900 1.900l-5 5" stroke="#ffcc88" stroke-width="1"/><circle cx="4.400" cy="4.400" r="1.100" fill="#2d2d30"/></svg>
<div style="left:1070.5px;top:54px;width:0;height:0;border-left:3.5px solid transparent;border-right:3.5px solid transparent;border-top:4px solid #999"></div>
<svg style="left:1083px;top:47px;" width="16" height="16" viewBox="0 0 16 16"><path d="M1.500 14.800V6.800h11.500V10" fill="none" stroke="#dcb67a" stroke-width="1.100"/><path d="M1.500 15.300l2-5h11.500l-2 5z" fill="#dcb67a"/><path d="M2.300 8.800C2.300 4.800 5 3.400 8.500 3.400M6.300 0.800L9 3.400L6.300 6" fill="none" stroke="#75beff" stroke-width="1.600"/></svg>
<svg style="left:1107px;top:49px;" width="12" height="12" viewBox="0 0 12 12"><path d="M0 0h10l2 2v10h-12z" fill="#75beff"/><rect x="3.300" y="0" width="6.300" height="4.900" fill="#2d2d30"/><rect x="5.800" y="0" width="2.200" height="2.400" fill="#75beff"/></svg>
<svg style="left:1127px;top:47px;" width="16" height="16" viewBox="0 0 16 16"><path d="M7 1h6.500l1.700 1.700v6.300h-8.200z" fill="#75beff"/><rect x="9" y="1" width="4" height="2.800" fill="#2d2d30"/><rect x="10.800" y="1" width="1.300" height="1.600" fill="#75beff"/><path d="M1 6.500h6.300l1.700 1.700v6.800h-8z" fill="#75beff" stroke="#2d2d30" stroke-width="0.900"/><rect x="3" y="6.500" width="3.800" height="2.800" fill="#2d2d30"/><rect x="4.600" y="6.500" width="1.300" height="1.600" fill="#75beff"/></svg>
<div style="left:1150px;top:45px;width:1px;height:19px;background:#46464a;"></div>
<svg style="left:1158px;top:47px;" width="14" height="14" viewBox="0 0 14 14"><path d="M2 1v5h5M2.5 6C5 2 11 2 11.5 6.5C11.5 9 9 11 6 13.5" fill="none" stroke="#5a5a5e" stroke-width="1.8"/></svg>
<div style="left:1179.5px;top:54px;width:0;height:0;border-left:3.5px solid transparent;border-right:3.5px solid transparent;border-top:4px solid #5a5a5e"></div>
<svg style="left:1193px;top:47px;" width="14" height="14" viewBox="0 0 14 14"><path d="M12 1v5h-5M11.5 6C9 2 3 2 2.5 6.5C2.5 9 5 11 8 13.5" fill="none" stroke="#5a5a5e" stroke-width="1.8"/></svg>
<div style="left:1214.5px;top:54px;width:0;height:0;border-left:3.5px solid transparent;border-right:3.5px solid transparent;border-top:4px solid #5a5a5e"></div>
<div style="left:1228px;top:45px;width:1px;height:19px;background:#46464a;"></div>
<div style="left:1235px;top:44px;width:65px;height:22px;background:#333337;border:1px solid #434346;"></div>
<span class="t" style="top:47px;font-size:11.75px;line-height:15px;color:#f1f1f1;left:1239.5px;letter-spacing:-0.281px;">Debug</span>
<div style="left:1289.5px;top:54px;width:0;height:0;border-left:3.5px solid transparent;border-right:3.5px solid transparent;border-top:4px solid #999"></div>
<div style="left:1306px;top:44px;width:110px;height:22px;background:#333337;border:1px solid #434346;"></div>
<span class="t" style="top:47px;font-size:12px;line-height:16px;color:#f1f1f1;left:1310px;letter-spacing:-0.391px;">Any CPU</span>
<div style="left:1405.5px;top:54px;width:0;height:0;border-left:3.5px solid transparent;border-right:3.5px solid transparent;border-top:4px solid #999"></div>
<svg style="left:1426px;top:48px;" width="10" height="14" viewBox="0 0 10 14"><path d="M0.5 0.5L9.5 7L0.5 13.5Z" fill="#8ae28a"/></svg>
<span class="t" style="top:47px;font-size:12px;line-height:16px;color:#f1f1f1;left:1443px;letter-spacing:0.097px;">wixpro.shop</span>
<div style="left:1513.5px;top:54px;width:0;height:0;border-left:3.5px solid transparent;border-right:3.5px solid transparent;border-top:4px solid #999"></div>
<div style="left:1527px;top:45px;width:1px;height:19px;background:#46464a;"></div>
<svg style="left:1534px;top:47px;" width="16" height="16" viewBox="0 0 16 16"><path d="M4 3h4l1-1.5h6.5v9h-11.5z" fill="#dcb67a"/><circle cx="4.5" cy="10.5" r="2.6" fill="#2d2d30" stroke="#75beff" stroke-width="1.3"/><path d="M2.7 12.5L0.7 14.8" stroke="#75beff" stroke-width="1.6"/></svg>
<div style="left:1557px;top:45px;width:1px;height:19px;background:#46464a;"></div>
<svg style="left:1564px;top:49px;" width="15" height="12" viewBox="0 0 15 12"><rect x="0.5" y="0.5" width="14" height="11" fill="none" stroke="#d0d0d0"/><path d="M4 6.5L7.5 3.5L11 6.5M5 6v3.5h5V6" fill="none" stroke="#75beff" stroke-width="1.2"/><rect x="9.5" y="2" width="1" height="1" fill="#d0d0d0"/><rect x="11.5" y="2" width="1" height="1" fill="#d0d0d0"/></svg>
<div style="left:1587px;top:58px;width:6px;height:1px;background:#999;"></div>
<div style="left:1586.5px;top:61px;width:0;height:0;border-left:3.0px solid transparent;border-right:3.0px solid transparent;border-top:3px solid #999"></div>
<svg style="left:1598px;top:46px;" width="5" height="19" viewBox="0 0 5 19"><g fill="#5a5a5e"><rect x="0" y="0" width="1" height="1"/><rect x="2" y="2" width="1" height="1"/><rect x="4" y="0" width="1" height="1"/><rect x="0" y="4" width="1" height="1"/><rect x="2" y="6" width="1" height="1"/><rect x="4" y="4" width="1" height="1"/><rect x="0" y="8" width="1" height="1"/><rect x="2" y="10" width="1" height="1"/><rect x="4" y="8" width="1" height="1"/><rect x="0" y="12" width="1" height="1"/><rect x="2" y="14" width="1" height="1"/><rect x="4" y="12" width="1" height="1"/><rect x="0" y="16" width="1" height="1"/><rect x="2" y="18" width="1" height="1"/><rect x="4" y="16" width="1" height="1"/></g></svg>
<svg style="left:1610px;top:48px;" width="15" height="14" viewBox="0 0 15 14"><path d="M1 0.500l5.200 5.300h-2.700l-2.500 2.200z" fill="#75beff"/><rect x="2.500" y="6.500" width="11" height="6" fill="#2d2d30" stroke="#d0d0d0" stroke-width="1"/><path d="M5 9.500h6" stroke="#d0d0d0" stroke-width="1"/></svg>
<svg style="left:1631px;top:47px;" width="16" height="15" viewBox="0 0 16 15"><path d="M5 3.500h-3.500v7h3.500M3.500 1.500v4" fill="none" stroke="#75beff" stroke-width="1.200"/><path d="M7.300 1v14" stroke="#d0d0d0" stroke-width="1.100"/><g stroke="#d0d0d0" stroke-width="1.100"><path d="M6.800 1.500h8.500M9 4.500h4M10 6.500h5.300M10 9.500h5.300M10 11.500h5.300M10 14.500h5.300"/></g></svg>
<div style="left:1654px;top:45px;width:1px;height:19px;background:#46464a;"></div>
<svg style="left:1663px;top:49px;" width="12" height="13" viewBox="0 0 12 13"><g stroke-width="1.100"><path d="M0.500 1.500h2M3.500 1.500h8M6 9.500h5.500M3 11.500h8.500" stroke="#d0d0d0"/><path d="M4 4.500h7.500M4 6.500h7.500" stroke="#8ae28a"/></g></svg>
<svg style="left:1685px;top:48px;" width="13" height="13" viewBox="0 0 13 13"><path d="M0.5 1v3.5h3.5M1 4C2 1.5 6 1.5 6 4.5C6 6 4.5 6.5 3.5 8" fill="none" stroke="#75beff" stroke-width="1.5"/><g stroke="#d0d0d0" stroke-width="1.1"><path d="M7 3.5h6M7 6.5h6M5 9.5h8M5 12.5h8"/></g></svg>
<div style="left:1706px;top:45px;width:1px;height:19px;background:#46464a;"></div>
<svg style="left:1715px;top:48px;" width="11" height="14" viewBox="0 0 11 14"><path d="M0 0h11v14l-5.5-4.5L0 14z" fill="#c8c8c8"/></svg>
<svg style="left:1738px;top:48px;" width="11" height="13" viewBox="0 0 11 13"><path d="M5 0h6v13l-3-2.5L5 13z" fill="#55555a"/><path d="M7 3.5H1.5M3.5 1L1 3.5L3.5 6" fill="none" stroke="#55555a" stroke-width="1.5"/></svg>
<svg style="left:1758px;top:46px;" width="7" height="5" viewBox="0 0 7 5"><path d="M0 0l2.500 2.500L0 5zM4 0l2.500 2.500L4 5z" fill="#999"/></svg>
<div style="left:1758px;top:58px;width:6px;height:1px;background:#999;"></div>
<div style="left:1757.5px;top:61px;width:0;height:0;border-left:3.0px solid transparent;border-right:3.0px solid transparent;border-top:3px solid #999"></div>
<svg style="left:1786px;top:49px;" width="15" height="14" viewBox="0 0 15 14"><path d="M0.5 4v9.5h12V10" fill="none" stroke="#d0d0d0" stroke-width="1.1"/><path d="M3.5 9.5C4 6 6.5 4.5 9.5 4.5V1.5l4.5 4.5l-4.5 4.500V7.500C7 7.5 5 8 3.5 9.5Z" fill="none" stroke="#d0d0d0" stroke-width="1.1"/></svg>
<span class="t" style="top:49px;font-size:11.75px;line-height:15px;color:#f1f1f1;left:1807px;letter-spacing:-0.352px;">Live Share</span>
<svg style="left:1885px;top:48px;" width="15" height="15" viewBox="0 0 15 15"><rect x="6.500" y="0.500" width="8" height="5.500" fill="none" stroke="#d0d0d0"/><path d="M9 6v2l2-2" fill="#d0d0d0"/><circle cx="5" cy="7" r="2.300" fill="none" stroke="#d0d0d0" stroke-width="1.2"/><path d="M0.500 14.500C1 11 3 10 5 10S9 11 9.500 14.500" fill="none" stroke="#d0d0d0" stroke-width="1.2"/></svg>
<div style="left:960px;top:81px;width:6px;height:104px;background:#3f3f46;"></div>
<span class="t" style="left:983px;top:82px;font-size:12px;line-height:14px;color:#d0d0d0;transform-origin:0 0;transform:rotate(90deg);letter-spacing:-0.185px">Панель элементов</span>
<div style="left:992px;top:81px;width:86px;height:19px;background:#007acc;"></div>
<div style="left:992px;top:100px;width:768px;height:2px;background:#007acc;"></div>
<span class="t" style="top:83px;font-size:11.75px;line-height:15px;color:#fff;left:996.5px;letter-spacing:-0.283px;">Blips.cs</span>
<svg style="left:1045px;top:88px;" width="9" height="9" viewBox="0 0 9 9"><path d="M0 4.500h3M3.500 1.500v6M3.500 2.500h5v3.500h-5" fill="none" stroke="#fff" stroke-width="1"/><path d="M3.500 5.500h5" stroke="#fff" stroke-width="1.6"/></svg>
<svg style="left:1063.5px;top:87.5px;" width="9" height="9" viewBox="0 0 9 9"><path d="M0.7 0.7L8.3 8.3M8.3 0.7L0.7 8.3" stroke="#fff" stroke-width="1.2" fill="none"/></svg>
<span class="t" style="top:83px;font-size:12px;line-height:16px;color:#f1f1f1;left:1083px;letter-spacing:0.047px;">wixpro.shop</span>
<div style="left:1732px;top:90px;width:0;height:0;border-left:4.0px solid transparent;border-right:4.0px solid transparent;border-top:4px solid #f1f1f1"></div>
<svg style="left:1749px;top:85px;" width="10" height="10" viewBox="0 0 10 10"><circle cx="5" cy="5" r="2.600" fill="none" stroke="#f1f1f1" stroke-width="1.800"/><g stroke="#f1f1f1" stroke-width="1.500"><path d="M5 0v1.800M5 8.200v1.800M0 5h1.800M8.200 5h1.800M1.500 1.500l1.200 1.200M7.300 7.300l1.200 1.200M8.500 1.500L7.300 2.700M2.700 7.300L1.500 8.500"/></g></svg>
<div style="left:992px;top:102px;width:768px;height:21px;background:#2d2d30;"></div>
<div style="left:992px;top:103px;width:254px;height:20px;background:#333337;border:1px solid #3f3f46;"></div>
<div style="left:1249px;top:103px;width:254px;height:20px;background:#333337;border:1px solid #3f3f46;"></div>
<div style="left:1506px;top:103px;width:254px;height:20px;background:#333337;border:1px solid #3f3f46;"></div>
<div style="left:996px;top:107px;width:14px;height:12px;border:1px solid #8ae28a;"></div>
<span class="t" style="left:998.5px;top:108px;font-size:8px;line-height:10px;color:#e8e8e8;letter-spacing:-0.2px">C#</span>
<span class="t" style="top:105px;font-size:12px;line-height:16px;color:#f1f1f1;left:1013px;letter-spacing:0.047px;">wixpro.shop</span>
<div style="left:1236.5px;top:111px;width:0;height:0;border-left:3.5px solid transparent;border-right:3.5px solid transparent;border-top:4px solid #999"></div>
<svg style="left:1252px;top:105px;" width="15" height="14" viewBox="0 0 15 14"><path d="M1 5l3-3 2.500 2.500L9 2l2.500 2.500-3 3L6 5l-2.500 2.500z" fill="#e8b86a"/><path d="M7 9h4l2 2.500-2 2.500H9z" fill="#c8c8c8"/><path d="M4 7l3 3" stroke="#e8b86a"/></svg>
<span class="t" style="top:105px;font-size:12px;line-height:16px;color:#999;left:1270.5px;letter-spacing:-0.256px;">WixPro.Blips.Blips</span>
<div style="left:1493.5px;top:111px;width:0;height:0;border-left:3.5px solid transparent;border-right:3.5px solid transparent;border-top:4px solid #999"></div>
<svg style="left:1509px;top:105px;" width="15" height="15" viewBox="0 0 15 15"><path d="M1 4l5-3 5 3v4l-5 3-5-3z" fill="#75beff"/><path d="M1 4l5 3 5-3M6 7v4" stroke="#3a8ee0" fill="none" stroke-width="0.7"/><rect x="9.500" y="10.500" width="5" height="4" fill="#e0e0e0"/><path d="M10.500 10.500v-1.500a1.500 1.500 0 0 1 3 0v1.500" fill="none" stroke="#e0e0e0"/></svg>
<span class="t" style="top:105px;font-size:12px;line-height:16px;color:#999;left:1527px;letter-spacing:-0.010px;">Log</span>
<div style="left:1750.5px;top:111px;width:0;height:0;border-left:3.5px solid transparent;border-right:3.5px solid transparent;border-top:4px solid #999"></div>
<div style="left:992px;top:123px;width:17px;height:855px;background:#333337;"></div>
<div style="left:1009px;top:123px;width:728px;height:855px;background:#1e1e1e;"></div>
<div style="left:1082px;top:503px;width:654px;height:14px;border:1px solid #464646;border-width:2px 2px 2px 2px;"></div>
<div style="left:1077px;top:136px;width:1px;height:35px;background:#a5a5a5;"></div>
<div style="left:1077px;top:200px;width:1px;height:300px;background:#a5a5a5;"></div>
<div style="left:1077px;top:245px;width:1px;height:240px;background:#a5a5a5;"></div>
<div style="left:1077px;top:338px;width:1px;height:132px;background:#a5a5a5;"></div>
<div style="left:1077px;top:370px;width:1px;height:84px;background:#a5a5a5;"></div>
<div style="left:1077px;top:171px;width:5px;height:1px;background:#a5a5a5;"></div>
<div style="left:1077px;top:500px;width:5px;height:1px;background:#a5a5a5;"></div>
<div style="left:1077px;top:485px;width:5px;height:1px;background:#a5a5a5;"></div>
<div style="left:1077px;top:470px;width:5px;height:1px;background:#a5a5a5;"></div>
<div style="left:1077px;top:454px;width:5px;height:1px;background:#a5a5a5;"></div>
<div style="left:1072px;top:128px;width:9px;height:9px;background:#1e1e1e;border:1px solid #a5a5a5;"></div>
<div style="left:1074px;top:132px;width:5px;height:1px;background:#a5a5a5;"></div>
<div style="left:1072px;top:192px;width:9px;height:9px;background:#1e1e1e;border:1px solid #a5a5a5;"></div>
<div style="left:1074px;top:196px;width:5px;height:1px;background:#a5a5a5;"></div>
<div style="left:1072px;top:237px;width:9px;height:9px;background:#1e1e1e;border:1px solid #a5a5a5;"></div>
<div style="left:1074px;top:241px;width:5px;height:1px;background:#a5a5a5;"></div>
<div style="left:1072px;top:330px;width:9px;height:9px;background:#1e1e1e;border:1px solid #a5a5a5;"></div>
<div style="left:1074px;top:334px;width:5px;height:1px;background:#a5a5a5;"></div>
<div style="left:1072px;top:362px;width:9px;height:9px;background:#1e1e1e;border:1px solid #a5a5a5;"></div>
<div style="left:1074px;top:366px;width:5px;height:1px;background:#a5a5a5;"></div>
<div style="left:1086px;top:220px;width:1px;height:266px;background:repeating-linear-gradient(#555 0 2px,transparent 2px 4px)"></div>
<div style="left:1114px;top:265px;width:1px;height:205px;background:repeating-linear-gradient(#555 0 2px,transparent 2px 4px)"></div>
<div style="left:1142px;top:358px;width:1px;height:96px;background:repeating-linear-gradient(#555 0 2px,transparent 2px 4px)"></div>
<div style="left:1170px;top:390px;width:1px;height:32px;background:repeating-linear-gradient(#555 0 2px,transparent 2px 4px)"></div>
<span class="t" style="top:220px;font-size:9.5px;line-height:13px;color:#999;left:1111px;letter-spacing:0.239px;">Ссылок: 0</span>
<span class="t" style="top:313px;font-size:9.5px;line-height:13px;color:#999;left:1139px;letter-spacing:0.239px;">Ссылок: 0</span>
<span class="t" style="top:125px;font-size:12.5px;line-height:16px;color:#2b91af;right:876px;font-family:'Liberation Mono',monospace;letter-spacing:-0.5px;">1</span>
<span class="t" style="top:125px;font-size:12.5px;line-height:16px;color:#dcdcdc;left:1083px;font-family:'Liberation Mono',monospace;letter-spacing:-0.5px;"><span style="color:#569cd6">using</span><span style="color:#dcdcdc"> GTANetworkAPI;</span></span>
<span class="t" style="top:141px;font-size:12.5px;line-height:16px;color:#2b91af;right:876px;font-family:'Liberation Mono',monospace;letter-spacing:-0.5px;">2</span>
<span class="t" style="top:141px;font-size:12.5px;line-height:16px;color:#dcdcdc;left:1083px;font-family:'Liberation Mono',monospace;letter-spacing:-0.5px;"><span style="color:#569cd6">using</span><span style="color:#dcdcdc"> WixPro.Settings;</span></span>
<span class="t" style="top:157px;font-size:12.5px;line-height:16px;color:#2b91af;right:876px;font-family:'Liberation Mono',monospace;letter-spacing:-0.5px;">3</span>
<span class="t" style="top:157px;font-size:12.5px;line-height:16px;color:#dcdcdc;left:1083px;font-family:'Liberation Mono',monospace;letter-spacing:-0.5px;"><span style="color:#569cd6">using</span><span style="color:#dcdcdc"> System;</span></span>
<span class="t" style="top:173px;font-size:12.5px;line-height:16px;color:#2b91af;right:876px;font-family:'Liberation Mono',monospace;letter-spacing:-0.5px;">4</span>
<span class="t" style="top:189px;font-size:12.5px;line-height:16px;color:#2b91af;right:876px;font-family:'Liberation Mono',monospace;letter-spacing:-0.5px;">5</span>
<span class="t" style="top:189px;font-size:12.5px;line-height:16px;color:#dcdcdc;left:1083px;font-family:'Liberation Mono',monospace;letter-spacing:-0.5px;"><span style="color:#569cd6">namespace</span><span style="color:#dcdcdc"> WixPro.Blips</span></span>
<span class="t" style="top:205px;font-size:12.5px;line-height:16px;color:#2b91af;right:876px;font-family:'Liberation Mono',monospace;letter-spacing:-0.5px;">6</span>
<span class="t" style="top:205px;font-size:12.5px;line-height:16px;color:#dcdcdc;left:1083px;font-family:'Liberation Mono',monospace;letter-spacing:-0.5px;"><span style="color:#dcdcdc">{</span></span>
<span class="t" style="top:234px;font-size:12.5px;line-height:16px;color:#2b91af;right:876px;font-family:'Liberation Mono',monospace;letter-spacing:-0.5px;">7</span>
<span class="t" style="top:234px;font-size:12.5px;line-height:16px;color:#dcdcdc;left:1111px;font-family:'Liberation Mono',monospace;letter-spacing:-0.5px;"><span style="color:#569cd6">class</span><span style="color:#dcdcdc"> </span><span style="color:#4ec9b0">Blips</span><span style="color:#dcdcdc"> : </span><span style="color:#4ec9b0">Script</span></span>
<span class="t" style="top:250px;font-size:12.5px;line-height:16px;color:#2b91af;right:876px;font-family:'Liberation Mono',monospace;letter-spacing:-0.5px;">8</span>
<span class="t" style="top:250px;font-size:12.5px;line-height:16px;color:#dcdcdc;left:1111px;font-family:'Liberation Mono',monospace;letter-spacing:-0.5px;"><span style="color:#dcdcdc">{</span></span>
<span class="t" style="top:266px;font-size:12.5px;line-height:16px;color:#2b91af;right:876px;font-family:'Liberation Mono',monospace;letter-spacing:-0.5px;">9</span>
<span class="t" style="top:266px;font-size:12.5px;line-height:16px;color:#dcdcdc;left:1139px;font-family:'Liberation Mono',monospace;letter-spacing:-0.5px;"><span style="color:#569cd6">private static readonly</span><span style="color:#dcdcdc"> </span><span style="color:#4ec9b0">NLog</span><span style="color:#dcdcdc"> Log = </span><span style="color:#569cd6">new</span><span style="color:#dcdcdc"> </span><span style="color:#4ec9b0">NLog</span><span style="color:#dcdcdc">(</span><span style="color:#d69d85">&quot;Blips&quot;</span><span style="color:#dcdcdc">);</span></span>
<span class="t" style="top:282px;font-size:12.5px;line-height:16px;color:#2b91af;right:876px;font-family:'Liberation Mono',monospace;letter-spacing:-0.5px;">10</span>
<span class="t" style="top:298px;font-size:12.5px;line-height:16px;color:#2b91af;right:876px;font-family:'Liberation Mono',monospace;letter-spacing:-0.5px;">11</span>
<span class="t" style="top:298px;font-size:12.5px;line-height:16px;color:#dcdcdc;left:1139px;font-family:'Liberation Mono',monospace;letter-spacing:-0.5px;"><span style="color:#dcdcdc">[</span><span style="color:#4ec9b0">ServerEvent</span><span style="color:#dcdcdc">(</span><span style="color:#b8d7a3">Event</span><span style="color:#dcdcdc">.ResourceStart)]</span></span>
<span class="t" style="top:327px;font-size:12.5px;line-height:16px;color:#2b91af;right:876px;font-family:'Liberation Mono',monospace;letter-spacing:-0.5px;">12</span>
<span class="t" style="top:327px;font-size:12.5px;line-height:16px;color:#dcdcdc;left:1139px;font-family:'Liberation Mono',monospace;letter-spacing:-0.5px;"><span style="color:#569cd6">public void</span><span style="color:#dcdcdc"> Event_ResourceStart()</span></span>
<span class="t" style="top:343px;font-size:12.5px;line-height:16px;color:#2b91af;right:876px;font-family:'Liberation Mono',monospace;letter-spacing:-0.5px;">13</span>
<span class="t" style="top:343px;font-size:12.5px;line-height:16px;color:#dcdcdc;left:1139px;font-family:'Liberation Mono',monospace;letter-spacing:-0.5px;"><span style="color:#dcdcdc">{</span></span>
<span class="t" style="top:359px;font-size:12.5px;line-height:16px;color:#2b91af;right:876px;font-family:'Liberation Mono',monospace;letter-spacing:-0.5px;">14</span>
<span class="t" style="top:359px;font-size:12.5px;line-height:16px;color:#dcdcdc;left:1167px;font-family:'Liberation Mono',monospace;letter-spacing:-0.5px;"><span style="color:#569cd6">try</span></span>
<span class="t" style="top:375px;font-size:12.5px;line-height:16px;color:#2b91af;right:876px;font-family:'Liberation Mono',monospace;letter-spacing:-0.5px;">15</span>
<span class="t" style="top:375px;font-size:12.5px;line-height:16px;color:#dcdcdc;left:1167px;font-family:'Liberation Mono',monospace;letter-spacing:-0.5px;"><span style="color:#dcdcdc">{</span></span>
<span class="t" style="top:391px;font-size:12.5px;line-height:16px;color:#2b91af;right:876px;font-family:'Liberation Mono',monospace;letter-spacing:-0.5px;">16</span>
<span class="t" style="top:391px;font-size:12.5px;line-height:16px;color:#dcdcdc;left:1195px;font-family:'Liberation Mono',monospace;letter-spacing:-0.5px;"><span style="color:#4ec9b0">NAPI</span><span style="color:#dcdcdc">.Blip.CreateBlip(</span><span style="color:#b5cea8">500</span><span style="color:#dcdcdc">, </span><span style="color:#569cd6">new</span><span style="color:#dcdcdc"> </span><span style="color:#4ec9b0">Vector3</span><span style="color:#dcdcdc">(</span><span style="color:#b5cea8">249.25235</span><span style="color:#dcdcdc">, </span><span style="color:#b5cea8">217.849686</span><span style="color:#dcdcdc">, </span><span style="color:#b5cea8">105.1668</span><span style="color:#dcdcdc">), </span><span style="color:#b5cea8">0.8f</span><span style="color:#dcdcdc">,</span></span>
<span class="t" style="top:407px;font-size:12.5px;line-height:16px;color:#2b91af;right:876px;font-family:'Liberation Mono',monospace;letter-spacing:-0.5px;">17</span>
<span class="t" style="top:407px;font-size:12.5px;line-height:16px;color:#dcdcdc;left:1195px;font-family:'Liberation Mono',monospace;letter-spacing:-0.5px;"><span style="color:#4ec9b0">NAPI</span><span style="color:#dcdcdc">.Blip.CreateBlip(</span><span style="color:#b5cea8">595</span><span style="color:#dcdcdc">, </span><span style="color:#569cd6">new</span><span style="color:#dcdcdc"> </span><span style="color:#4ec9b0">Vector3</span><span style="color:#dcdcdc">(</span><span style="color:#b5cea8">-1641.954</span><span style="color:#dcdcdc">, </span><span style="color:#b5cea8">-894.84080</span><span style="color:#dcdcdc">, </span><span style="color:#b5cea8">7.712609</span><span style="color:#dcdcdc">), </span><span style="color:#b5cea8">0.8f</span><span style="color:#dcdcdc">,</span></span>
<span class="t" style="top:423px;font-size:12.5px;line-height:16px;color:#2b91af;right:876px;font-family:'Liberation Mono',monospace;letter-spacing:-0.5px;">18</span>
<span class="t" style="top:423px;font-size:12.5px;line-height:16px;color:#dcdcdc;left:1167px;font-family:'Liberation Mono',monospace;letter-spacing:-0.5px;"><span style="color:#dcdcdc">}</span></span>
<span class="t" style="top:439px;font-size:12.5px;line-height:16px;color:#2b91af;right:876px;font-family:'Liberation Mono',monospace;letter-spacing:-0.5px;">19</span>
<span class="t" style="top:439px;font-size:12.5px;line-height:16px;color:#dcdcdc;left:1167px;font-family:'Liberation Mono',monospace;letter-spacing:-0.5px;"><span style="color:#569cd6;text-decoration:underline wavy #6a9955 1px;text-underline-offset:2px">catch</span><span style="color:#dcdcdc"> (</span><span style="color:#4ec9b0">Exception</span><span style="color:#dcdcdc"> e) { Log.Write(</span><span style="color:#d69d85">&quot;ServerStart: &quot;</span><span style="color:#dcdcdc"> + e.Message, </span><span style="color:#4ec9b0">NLog</span><span style="color:#dcdcdc">.</span><span style="color:#4ec9b0">Type</span><span style="color:#dcdcdc">.Error); }</span></span>
<span class="t" style="top:455px;font-size:12.5px;line-height:16px;color:#2b91af;right:876px;font-family:'Liberation Mono',monospace;letter-spacing:-0.5px;">20</span>
<span class="t" style="top:455px;font-size:12.5px;line-height:16px;color:#dcdcdc;left:1139px;font-family:'Liberation Mono',monospace;letter-spacing:-0.5px;"><span style="color:#dcdcdc">}</span></span>
<span class="t" style="top:471px;font-size:12.5px;line-height:16px;color:#2b91af;right:876px;font-family:'Liberation Mono',monospace;letter-spacing:-0.5px;">21</span>
<span class="t" style="top:471px;font-size:12.5px;line-height:16px;color:#dcdcdc;left:1111px;font-family:'Liberation Mono',monospace;letter-spacing:-0.5px;"><span style="color:#dcdcdc">}</span></span>
<span class="t" style="top:487px;font-size:12.5px;line-height:16px;color:#2b91af;right:876px;font-family:'Liberation Mono',monospace;letter-spacing:-0.5px;">22</span>
<span class="t" style="top:487px;font-size:12.5px;line-height:16px;color:#dcdcdc;left:1083px;font-family:'Liberation Mono',monospace;letter-spacing:-0.5px;"><span style="color:#dcdcdc">}</span></span>
<span class="t" style="top:503px;font-size:12.5px;line-height:16px;color:#2b91af;right:876px;font-family:'Liberation Mono',monospace;letter-spacing:-0.5px;">23</span>
<div style="left:1737px;top:123px;width:23px;height:855px;background:#3e3e42;"></div>
<div style="left:1738px;top:124px;width:22px;height:16px;background:#1e1e1e;"></div>
<svg style="left:1743px;top:126px;" width="12" height="12" viewBox="0 0 12 12"><path d="M1 5.500h10M1 7.500h10M6 0v12M3.500 2.500L6 0l2.500 2.500M3.500 9.500L6 12l2.500-2.500" fill="none" stroke="#f1f1f1" stroke-width="1"/></svg>
<svg style="left:1744px;top:147px;" width="9" height="5" viewBox="0 0 9 5"><path d="M0 5L4.500 0L9 5z" fill="#999"/></svg>
<svg style="left:1744px;top:966px;" width="9" height="5" viewBox="0 0 9 5"><path d="M0 0L4.500 5L9 0z" fill="#999"/></svg>
<div style="left:1741px;top:158px;width:15px;height:542px;background:#686868;"></div>
<div style="left:1755px;top:347px;width:5px;height:6px;background:#8ae28a;"></div>
<div style="left:1737px;top:391px;width:23px;height:2px;background:#d8d8d8;"></div>
<div style="left:1767px;top:81px;width:147px;height:916px;background:#252526;border:1px solid #3f3f46;"></div>
<div style="left:1768px;top:82px;width:145px;height:21px;background:#2d2d30;"></div>
<div style="left:1768px;top:82px;width:141px;height:21px;overflow:hidden">
<span class="t" style="top:3px;font-size:12px;line-height:16px;color:#f1f1f1;left:4.5px;letter-spacing:-0.113px;">Обозреватель решений</span>
</div>
<svg style="left:1906px;top:90px;" width="5" height="5" viewBox="0 0 5 5"><path d="M0 0h5v5z" fill="#f1f1f1"/></svg>
<div style="left:1768px;top:103px;width:145px;height:28px;background:#2d2d30;"></div>
<svg style="left:1777px;top:111px;" width="13" height="13" viewBox="0 0 13 13"><circle cx="6.500" cy="6.500" r="6" fill="#4a4a4e"/><path d="M10 6.500H3.500M6 4L3.500 6.500L6 9" fill="none" stroke="#2d2d30" stroke-width="1.500"/></svg>
<svg style="left:1799px;top:111px;" width="13" height="13" viewBox="0 0 13 13"><circle cx="6.500" cy="6.500" r="6" fill="#4a4a4e"/><path d="M3 6.500H9.500M7 4L9.500 6.500L7 9" fill="none" stroke="#2d2d30" stroke-width="1.500"/></svg>
<svg style="left:1820px;top:109px;" width="14" height="14" viewBox="0 0 14 14"><path d="M1 7.500L7 1.500L13 7.500M2.500 6.500V13.500H5.500V9.500H8.500V13.500H11.500V6.500" fill="none" stroke="#f1f1f1" stroke-width="1.300"/></svg>
<svg style="left:1843px;top:109px;" width="16" height="15" viewBox="0 0 16 15"><rect x="3.500" y="3.500" width="8" height="8" fill="none" stroke="#d0d0d0"/><rect x="8" y="0.500" width="7" height="6" fill="#dcb67a"/><rect x="0.500" y="8" width="6" height="5" fill="#2d2d30" stroke="#d0d0d0"/><path d="M9 12.500h4M11.500 10.500l2 2-2 2" fill="none" stroke="#75beff" stroke-width="1.100"/></svg>
<div style="left:1863.5px;top:116px;width:0;height:0;border-left:3.5px solid transparent;border-right:3.5px solid transparent;border-top:4px solid #999"></div>
<div style="left:1877px;top:107px;width:1px;height:20px;background:#46464a;"></div>
<svg style="left:1905px;top:107px;" width="7" height="5" viewBox="0 0 7 5"><path d="M0 0l2.500 2.500L0 5zM4 0l2.500 2.500L4 5z" fill="#999"/></svg>
<div style="left:1768px;top:131px;width:145px;height:21px;background:#333337;border:1px solid #3f3f46;"></div>
<div style="left:1901px;top:132px;width:12px;height:19px;background:#3e3e42;"></div>
<div style="left:1768px;top:131px;width:110px;height:21px;overflow:hidden">
<span class="t" style="top:3px;font-size:12px;line-height:16px;color:#999;left:5px;letter-spacing:-0.096px;">Обозреватель реш</span>
</div>
<svg style="left:1885px;top:135px;" width="13" height="13" viewBox="0 0 13 13"><circle cx="8.200" cy="4.800" r="3.300" fill="none" stroke="#f1f1f1" stroke-width="1.700"/><path d="M5.800 7.200L1.300 11.700" stroke="#f1f1f1" stroke-width="2.100" stroke-linecap="round"/></svg>
<div style="left:1902.5px;top:140px;width:0;height:0;border-left:3.5px solid transparent;border-right:3.5px solid transparent;border-top:4px solid #f1f1f1"></div>
<div style="left:1768px;top:152px;width:145px;height:826px;overflow:hidden">
<svg style="left:12px;top:5px;" width="16" height="14" viewBox="0 0 16 14"><path d="M1 9V0.500h13.500V11.500H9" fill="none" stroke="#d0d0d0"/><path d="M1 2.500h13.500" stroke="#d0d0d0"/><path d="M6.500 7.500L8 8.300V13.200L6.500 14L3.200 11.200L1.500 12.500L0.800 12V9.500L1.500 9L3.200 10.300Z M6.500 9.300L4.300 10.750L6.500 12.200Z" fill="#9a4ff0" fill-rule="evenodd"/></svg>
<span class="t" style="top:4px;font-size:12px;line-height:16px;color:#f1f1f1;left:33.5px;">Решение &quot;wixpro.shop&quot;</span>
<svg style="left:10.5px;top:25.5px;" width="7" height="7" viewBox="0 0 7 7"><path d="M7 0v7h-7z" fill="#f1f1f1"/></svg>
<div style="left:31px;top:23px;width:15px;height:13px;border:1px solid #8ae28a;"></div>
<span class="t" style="left:33.5px;top:25px;font-size:8.500px;line-height:9px;color:#e0e0e0;font-weight:bold;letter-spacing:-0.300px">C#</span>
<span class="t" style="top:22px;font-size:12px;line-height:16px;color:#f1f1f1;left:51px;font-weight:bold;letter-spacing:-0.267px;">wixpro.shop</span>
<svg style="left:29px;top:43px;" width="6" height="10" viewBox="0 0 6 10"><path d="M0.600 0.800L5.200 5L0.600 9.200z" fill="none" stroke="#f1f1f1" stroke-width="1.100"/></svg>
<svg style="left:49px;top:42px;" width="14" height="12" viewBox="0 0 14 12"><g fill="#d0d0d0"><rect x="8" y="0" width="6" height="5"/><rect x="0" y="7" width="4" height="4"/><rect x="7" y="7" width="5" height="5"/><rect x="3" y="3" width="3" height="3"/></g><rect x="9.500" y="1.500" width="3" height="2" fill="#252526"/></svg>
<span class="t" style="top:40px;font-size:12px;line-height:16px;color:#f1f1f1;left:69px;letter-spacing:0.017px;">Зависимости</span>
<svg style="left:29px;top:61px;" width="6" height="10" viewBox="0 0 6 10"><path d="M0.600 0.800L5.200 5L0.600 9.200z" fill="none" stroke="#f1f1f1" stroke-width="1.100"/></svg>
<svg style="left:50px;top:60.5px;" width="14" height="10.5" viewBox="0 0 14 10.5"><path d="M0 10.500V1.700h5l1.500-1.700h7.500v10.500z" fill="#dcb67a"/><path d="M6 1.800h7.500" stroke="#b8935a" stroke-width="0.700"/></svg>
<span class="t" style="top:59px;font-size:11.5px;line-height:14px;color:#f1f1f1;left:69px;letter-spacing:-0.312px;">Businesses</span>
<svg style="left:29px;top:79px;" width="6" height="10" viewBox="0 0 6 10"><path d="M0.600 0.800L5.200 5L0.600 9.200z" fill="none" stroke="#f1f1f1" stroke-width="1.100"/></svg>
<svg style="left:50px;top:78.5px;" width="14" height="10.5" viewBox="0 0 14 10.5"><path d="M0 10.500V1.700h5l1.500-1.700h7.500v10.500z" fill="#dcb67a"/><path d="M6 1.800h7.500" stroke="#b8935a" stroke-width="0.700"/></svg>
<span class="t" style="top:76px;font-size:12px;line-height:16px;color:#f1f1f1;left:69px;letter-spacing:-0.168px;">Fractions</span>
<svg style="left:29px;top:97px;" width="6" height="10" viewBox="0 0 6 10"><path d="M0.600 0.800L5.200 5L0.600 9.200z" fill="none" stroke="#f1f1f1" stroke-width="1.100"/></svg>
<svg style="left:50px;top:96.5px;" width="14" height="10.5" viewBox="0 0 14 10.5"><path d="M0 10.500V1.700h5l1.500-1.700h7.500v10.500z" fill="#dcb67a"/><path d="M6 1.800h7.500" stroke="#b8935a" stroke-width="0.700"/></svg>
<span class="t" style="top:94px;font-size:12px;line-height:16px;color:#f1f1f1;left:69px;letter-spacing:-0.337px;">Houses</span>
<svg style="left:29px;top:115px;" width="6" height="10" viewBox="0 0 6 10"><path d="M0.600 0.800L5.200 5L0.600 9.200z" fill="none" stroke="#f1f1f1" stroke-width="1.100"/></svg>
<svg style="left:50px;top:114.5px;" width="14" height="10.5" viewBox="0 0 14 10.5"><path d="M0 10.500V1.700h5l1.500-1.700h7.500v10.500z" fill="#dcb67a"/><path d="M6 1.800h7.500" stroke="#b8935a" stroke-width="0.700"/></svg>
<span class="t" style="top:112px;font-size:12px;line-height:16px;color:#f1f1f1;left:69px;letter-spacing:-0.086px;">Interface</span>
<svg style="left:27.5px;top:134.5px;" width="7" height="7" viewBox="0 0 7 7"><path d="M7 0v7h-7z" fill="#f1f1f1"/></svg>
<svg style="left:49px;top:132px;" width="15" height="12" viewBox="0 0 15 12"><path d="M0.500 11.500v-10h4.500l1.500 1.500h5.500v2" fill="none" stroke="#dcb67a"/><path d="M0.800 11.500l2.700-6.500h11l-2.700 6.500z" fill="#dcb67a"/></svg>
<span class="t" style="top:130px;font-size:12px;line-height:16px;color:#f1f1f1;left:69px;letter-spacing:-0.337px;">Kernel</span>
<svg style="left:47px;top:151px;" width="6" height="10" viewBox="0 0 6 10"><path d="M0.600 0.800L5.200 5L0.600 9.200z" fill="none" stroke="#f1f1f1" stroke-width="1.100"/></svg>
<span class="t" style="left:69px;top:150px;font-size:10px;line-height:11px;color:#8ae28a;font-weight:bold;letter-spacing:-0.400px">C#</span>
<span class="t" style="top:148px;font-size:12px;line-height:16px;color:#f1f1f1;left:87px;letter-spacing:-0.049px;">Admin.cs</span>
<svg style="left:47px;top:169px;" width="6" height="10" viewBox="0 0 6 10"><path d="M0.600 0.800L5.200 5L0.600 9.200z" fill="none" stroke="#f1f1f1" stroke-width="1.100"/></svg>
<span class="t" style="left:69px;top:168px;font-size:10px;line-height:11px;color:#8ae28a;font-weight:bold;letter-spacing:-0.400px">C#</span>
<span class="t" style="top:166px;font-size:12px;line-height:16px;color:#f1f1f1;left:87px;letter-spacing:-0.201px;">AdminSP.cs</span>
<svg style="left:47px;top:187px;" width="6" height="10" viewBox="0 0 6 10"><path d="M0.600 0.800L5.200 5L0.600 9.200z" fill="none" stroke="#f1f1f1" stroke-width="1.100"/></svg>
<span class="t" style="left:69px;top:186px;font-size:10px;line-height:11px;color:#8ae28a;font-weight:bold;letter-spacing:-0.400px">C#</span>
<span class="t" style="top:184px;font-size:11.75px;line-height:15px;color:#f1f1f1;left:87px;letter-spacing:-0.384px;">Ban.cs</span>
<svg style="left:47px;top:205px;" width="6" height="10" viewBox="0 0 6 10"><path d="M0.600 0.800L5.200 5L0.600 9.200z" fill="none" stroke="#f1f1f1" stroke-width="1.100"/></svg>
<span class="t" style="left:69px;top:204px;font-size:10px;line-height:11px;color:#8ae28a;font-weight:bold;letter-spacing:-0.400px">C#</span>
<span class="t" style="top:202px;font-size:11.75px;line-height:15px;color:#f1f1f1;left:87px;letter-spacing:-0.352px;">BasicSync.cs</span>
<div style="left:0px;top:219px;width:145px;height:18px;background:#3f3f46;"></div>
<svg style="left:47px;top:223px;" width="6" height="10" viewBox="0 0 6 10"><path d="M0.600 0.800L5.200 5L0.600 9.200z" fill="none" stroke="#f1f1f1" stroke-width="1.100"/></svg>
<span class="t" style="left:69px;top:222px;font-size:10px;line-height:11px;color:#8ae28a;font-weight:bold;letter-spacing:-0.400px">C#</span>
<span class="t" style="top:220px;font-size:12px;line-height:16px;color:#f1f1f1;left:87px;letter-spacing:-0.335px;">Blips.cs</span>
<svg style="left:47px;top:241px;" width="6" height="10" viewBox="0 0 6 10"><path d="M0.600 0.800L5.200 5L0.600 9.200z" fill="none" stroke="#f1f1f1" stroke-width="1.100"/></svg>
<span class="t" style="left:69px;top:240px;font-size:10px;line-height:11px;color:#8ae28a;font-weight:bold;letter-spacing:-0.400px">C#</span>
<span class="t" style="top:238px;font-size:12px;line-height:16px;color:#f1f1f1;left:87px;letter-spacing:-0.334px;">Carroom.cs</span>
<svg style="left:47px;top:259px;" width="6" height="10" viewBox="0 0 6 10"><path d="M0.600 0.800L5.200 5L0.600 9.200z" fill="none" stroke="#f1f1f1" stroke-width="1.100"/></svg>
<span class="t" style="left:69px;top:258px;font-size:10px;line-height:11px;color:#8ae28a;font-weight:bold;letter-spacing:-0.400px">C#</span>
<span class="t" style="top:256px;font-size:12px;line-height:16px;color:#f1f1f1;left:87px;letter-spacing:-0.305px;">Character.cs</span>
<svg style="left:47px;top:277px;" width="6" height="10" viewBox="0 0 6 10"><path d="M0.600 0.800L5.200 5L0.600 9.200z" fill="none" stroke="#f1f1f1" stroke-width="1.100"/></svg>
<span class="t" style="left:69px;top:276px;font-size:10px;line-height:11px;color:#8ae28a;font-weight:bold;letter-spacing:-0.400px">C#</span>
<span class="t" style="top:274px;font-size:12px;line-height:16px;color:#f1f1f1;left:87px;letter-spacing:-0.368px;">Commands.cs</span>
<svg style="left:47px;top:295px;" width="6" height="10" viewBox="0 0 6 10"><path d="M0.600 0.800L5.200 5L0.600 9.200z" fill="none" stroke="#f1f1f1" stroke-width="1.100"/></svg>
<span class="t" style="left:69px;top:294px;font-size:10px;line-height:11px;color:#8ae28a;font-weight:bold;letter-spacing:-0.400px">C#</span>
<span class="t" style="top:292px;font-size:12px;line-height:16px;color:#f1f1f1;left:87px;letter-spacing:-0.157px;">Customization.cs</span>
<svg style="left:47px;top:313px;" width="6" height="10" viewBox="0 0 6 10"><path d="M0.600 0.800L5.200 5L0.600 9.200z" fill="none" stroke="#f1f1f1" stroke-width="1.100"/></svg>
<span class="t" style="left:69px;top:312px;font-size:10px;line-height:11px;color:#8ae28a;font-weight:bold;letter-spacing:-0.400px">C#</span>
<span class="t" style="top:310px;font-size:12px;line-height:16px;color:#f1f1f1;left:87px;letter-spacing:-0.252px;">Dimensions.cs</span>
<svg style="left:47px;top:331px;" width="6" height="10" viewBox="0 0 6 10"><path d="M0.600 0.800L5.200 5L0.600 9.200z" fill="none" stroke="#f1f1f1" stroke-width="1.100"/></svg>
<span class="t" style="left:69px;top:330px;font-size:10px;line-height:11px;color:#8ae28a;font-weight:bold;letter-spacing:-0.400px">C#</span>
<span class="t" style="top:328px;font-size:12px;line-height:16px;color:#f1f1f1;left:87px;letter-spacing:-0.157px;">Doormanager.cs</span>
<svg style="left:47px;top:349px;" width="6" height="10" viewBox="0 0 6 10"><path d="M0.600 0.800L5.200 5L0.600 9.200z" fill="none" stroke="#f1f1f1" stroke-width="1.100"/></svg>
<span class="t" style="left:69px;top:348px;font-size:10px;line-height:11px;color:#8ae28a;font-weight:bold;letter-spacing:-0.400px">C#</span>
<span class="t" style="top:346px;font-size:12px;line-height:16px;color:#f1f1f1;left:87px;letter-spacing:-0.091px;">DrivingSchool.cs</span>
<svg style="left:47px;top:367px;" width="6" height="10" viewBox="0 0 6 10"><path d="M0.600 0.800L5.200 5L0.600 9.200z" fill="none" stroke="#f1f1f1" stroke-width="1.100"/></svg>
<span class="t" style="left:69px;top:366px;font-size:10px;line-height:11px;color:#8ae28a;font-weight:bold;letter-spacing:-0.400px">C#</span>
<span class="t" style="top:365px;font-size:11.5px;line-height:14px;color:#f1f1f1;left:87px;letter-spacing:-0.327px;">EventSys.cs</span>
<svg style="left:47px;top:385px;" width="6" height="10" viewBox="0 0 6 10"><path d="M0.600 0.800L5.200 5L0.600 9.200z" fill="none" stroke="#f1f1f1" stroke-width="1.100"/></svg>
<span class="t" style="left:69px;top:384px;font-size:10px;line-height:11px;color:#8ae28a;font-weight:bold;letter-spacing:-0.400px">C#</span>
<span class="t" style="top:382px;font-size:12px;line-height:16px;color:#f1f1f1;left:87px;letter-spacing:-0.210px;">Finger.cs</span>
<svg style="left:47px;top:403px;" width="6" height="10" viewBox="0 0 6 10"><path d="M0.600 0.800L5.200 5L0.600 9.200z" fill="none" stroke="#f1f1f1" stroke-width="1.100"/></svg>
<span class="t" style="left:69px;top:402px;font-size:10px;line-height:11px;color:#8ae28a;font-weight:bold;letter-spacing:-0.400px">C#</span>
<span class="t" style="top:400px;font-size:11.75px;line-height:15px;color:#f1f1f1;left:87px;letter-spacing:-0.290px;">GameLog.cs</span>
<svg style="left:47px;top:421px;" width="6" height="10" viewBox="0 0 6 10"><path d="M0.600 0.800L5.200 5L0.600 9.200z" fill="none" stroke="#f1f1f1" stroke-width="1.100"/></svg>
<span class="t" style="left:69px;top:420px;font-size:10px;line-height:11px;color:#8ae28a;font-weight:bold;letter-spacing:-0.400px">C#</span>
<span class="t" style="top:418px;font-size:12px;line-height:16px;color:#f1f1f1;left:87px;letter-spacing:0.018px;">Inventory.cs</span>
<svg style="left:47px;top:439px;" width="6" height="10" viewBox="0 0 6 10"><path d="M0.600 0.800L5.200 5L0.600 9.200z" fill="none" stroke="#f1f1f1" stroke-width="1.100"/></svg>
<span class="t" style="left:69px;top:438px;font-size:10px;line-height:11px;color:#8ae28a;font-weight:bold;letter-spacing:-0.400px">C#</span>
<span class="t" style="top:436px;font-size:12px;line-height:16px;color:#f1f1f1;left:87px;letter-spacing:0.064px;">nAccount.cs</span>
<svg style="left:47px;top:457px;" width="6" height="10" viewBox="0 0 6 10"><path d="M0.600 0.800L5.200 5L0.600 9.200z" fill="none" stroke="#f1f1f1" stroke-width="1.100"/></svg>
<span class="t" style="left:69px;top:456px;font-size:10px;line-height:11px;color:#8ae28a;font-weight:bold;letter-spacing:-0.400px">C#</span>
<span class="t" style="top:454px;font-size:11.75px;line-height:15px;color:#f1f1f1;left:87px;letter-spacing:-0.282px;">Needs.cs</span>
<svg style="left:47px;top:475px;" width="6" height="10" viewBox="0 0 6 10"><path d="M0.600 0.800L5.200 5L0.600 9.200z" fill="none" stroke="#f1f1f1" stroke-width="1.100"/></svg>
<span class="t" style="left:69px;top:474px;font-size:10px;line-height:11px;color:#8ae28a;font-weight:bold;letter-spacing:-0.400px">C#</span>
<span class="t" style="top:472px;font-size:12px;line-height:16px;color:#f1f1f1;left:87px;letter-spacing:-0.299px;">Rentcar.cs</span>
<svg style="left:47px;top:493px;" width="6" height="10" viewBox="0 0 6 10"><path d="M0.600 0.800L5.200 5L0.600 9.200z" fill="none" stroke="#f1f1f1" stroke-width="1.100"/></svg>
<span class="t" style="left:69px;top:492px;font-size:10px;line-height:11px;color:#8ae28a;font-weight:bold;letter-spacing:-0.400px">C#</span>
<span class="t" style="top:490px;font-size:12px;line-height:16px;color:#f1f1f1;left:87px;letter-spacing:-0.294px;">Report.cs</span>
<svg style="left:47px;top:511px;" width="6" height="10" viewBox="0 0 6 10"><path d="M0.600 0.800L5.200 5L0.600 9.200z" fill="none" stroke="#f1f1f1" stroke-width="1.100"/></svg>
<span class="t" style="left:69px;top:510px;font-size:10px;line-height:11px;color:#8ae28a;font-weight:bold;letter-spacing:-0.400px">C#</span>
<span class="t" style="top:508px;font-size:12px;line-height:16px;color:#f1f1f1;left:87px;letter-spacing:-0.200px;">Robbery.cs</span>
<svg style="left:47px;top:529px;" width="6" height="10" viewBox="0 0 6 10"><path d="M0.600 0.800L5.200 5L0.600 9.200z" fill="none" stroke="#f1f1f1" stroke-width="1.100"/></svg>
<span class="t" style="left:69px;top:528px;font-size:10px;line-height:11px;color:#8ae28a;font-weight:bold;letter-spacing:-0.400px">C#</span>
<span class="t" style="top:526px;font-size:11.75px;line-height:15px;color:#f1f1f1;left:87px;letter-spacing:-0.349px;">SafeZones.cs</span>
<svg style="left:47px;top:547px;" width="6" height="10" viewBox="0 0 6 10"><path d="M0.600 0.800L5.200 5L0.600 9.200z" fill="none" stroke="#f1f1f1" stroke-width="1.100"/></svg>
<span class="t" style="left:69px;top:546px;font-size:10px;line-height:11px;color:#8ae28a;font-weight:bold;letter-spacing:-0.400px">C#</span>
<span class="t" style="top:544px;font-size:12px;line-height:16px;color:#f1f1f1;left:87px;letter-spacing:-0.245px;">Selecting.cs</span>
<svg style="left:47px;top:565px;" width="6" height="10" viewBox="0 0 6 10"><path d="M0.600 0.800L5.200 5L0.600 9.200z" fill="none" stroke="#f1f1f1" stroke-width="1.100"/></svg>
<span class="t" style="left:69px;top:564px;font-size:10px;line-height:11px;color:#8ae28a;font-weight:bold;letter-spacing:-0.400px">C#</span>
<span class="t" style="top:562px;font-size:12px;line-height:16px;color:#f1f1f1;left:87px;letter-spacing:-0.225px;">Vehicle.cs</span>
<svg style="left:47px;top:583px;" width="6" height="10" viewBox="0 0 6 10"><path d="M0.600 0.800L5.200 5L0.600 9.200z" fill="none" stroke="#f1f1f1" stroke-width="1.100"/></svg>
<span class="t" style="left:69px;top:582px;font-size:10px;line-height:11px;color:#8ae28a;font-weight:bold;letter-spacing:-0.400px">C#</span>
<span class="t" style="top:580px;font-size:12px;line-height:16px;color:#f1f1f1;left:87px;letter-spacing:-0.285px;">VehicleSync.cs</span>
<svg style="left:47px;top:601px;" width="6" height="10" viewBox="0 0 6 10"><path d="M0.600 0.800L5.200 5L0.600 9.200z" fill="none" stroke="#f1f1f1" stroke-width="1.100"/></svg>
<span class="t" style="left:69px;top:600px;font-size:10px;line-height:11px;color:#8ae28a;font-weight:bold;letter-spacing:-0.400px">C#</span>
<span class="t" style="top:598px;font-size:12px;line-height:16px;color:#f1f1f1;left:87px;letter-spacing:-0.312px;">Weapons.cs</span>
<svg style="left:29px;top:619px;" width="6" height="10" viewBox="0 0 6 10"><path d="M0.600 0.800L5.200 5L0.600 9.200z" fill="none" stroke="#f1f1f1" stroke-width="1.100"/></svg>
<svg style="left:50px;top:618.5px;" width="14" height="10.5" viewBox="0 0 14 10.5"><path d="M0 10.500V1.700h5l1.500-1.700h7.500v10.500z" fill="#dcb67a"/><path d="M6 1.800h7.500" stroke="#b8935a" stroke-width="0.700"/></svg>
<span class="t" style="top:616px;font-size:12px;line-height:16px;color:#f1f1f1;left:69px;letter-spacing:0.246px;">Money</span>
<svg style="left:29px;top:637px;" width="6" height="10" viewBox="0 0 6 10"><path d="M0.600 0.800L5.200 5L0.600 9.200z" fill="none" stroke="#f1f1f1" stroke-width="1.100"/></svg>
<svg style="left:50px;top:636.5px;" width="14" height="10.5" viewBox="0 0 14 10.5"><path d="M0 10.500V1.700h5l1.500-1.700h7.500v10.500z" fill="#dcb67a"/><path d="M6 1.800h7.500" stroke="#b8935a" stroke-width="0.700"/></svg>
<span class="t" style="top:634px;font-size:12px;line-height:16px;color:#f1f1f1;left:69px;letter-spacing:-0.194px;">Settings</span>
<svg style="left:29px;top:655px;" width="6" height="10" viewBox="0 0 6 10"><path d="M0.600 0.800L5.200 5L0.600 9.200z" fill="none" stroke="#f1f1f1" stroke-width="1.100"/></svg>
<svg style="left:50px;top:654.5px;" width="14" height="10.5" viewBox="0 0 14 10.5"><path d="M0 10.500V1.700h5l1.500-1.700h7.500v10.500z" fill="#dcb67a"/><path d="M6 1.800h7.500" stroke="#b8935a" stroke-width="0.700"/></svg>
<span class="t" style="top:652px;font-size:12px;line-height:16px;color:#f1f1f1;left:69px;letter-spacing:-0.089px;">Voice</span>
<svg style="left:29px;top:673px;" width="6" height="10" viewBox="0 0 6 10"><path d="M0.600 0.800L5.200 5L0.600 9.200z" fill="none" stroke="#f1f1f1" stroke-width="1.100"/></svg>
<svg style="left:50px;top:672.5px;" width="14" height="10.5" viewBox="0 0 14 10.5"><path d="M0 10.500V1.700h5l1.500-1.700h7.500v10.500z" fill="#dcb67a"/><path d="M6 1.800h7.500" stroke="#b8935a" stroke-width="0.700"/></svg>
<span class="t" style="top:670px;font-size:12px;line-height:16px;color:#f1f1f1;left:69px;letter-spacing:-0.195px;">Works</span>
<svg style="left:29px;top:691px;" width="6" height="10" viewBox="0 0 6 10"><path d="M0.600 0.800L5.200 5L0.600 9.200z" fill="none" stroke="#f1f1f1" stroke-width="1.100"/></svg>
<span class="t" style="left:51px;top:690px;font-size:10px;line-height:11px;color:#8ae28a;font-weight:bold;letter-spacing:-0.400px">C#</span>
<span class="t" style="top:688px;font-size:12px;line-height:16px;color:#f1f1f1;left:69px;letter-spacing:-0.057px;">Main.cs</span>
<svg style="left:48px;top:706px;" width="15" height="15" viewBox="0 0 15 15"><path d="M3.500 8V0.500h6l3.500 3.500v8h-3" fill="none" stroke="#d0d0d0"/><path d="M9.500 0.500v3.500h3.500" fill="none" stroke="#d0d0d0"/><path d="M2.200 10L0.500 12l1.700 2M8.800 10l1.700 2-1.700 2" fill="none" stroke="#d0d0d0"/><rect x="3.800" y="11" width="3.400" height="2.600" fill="#d0d0d0"/><path d="M4.500 11v-1a1 1 0 0 1 2 0v1" fill="none" stroke="#d0d0d0" stroke-width="0.800"/></svg>
<span class="t" style="top:706px;font-size:12px;line-height:16px;color:#f1f1f1;left:69px;letter-spacing:-0.096px;">meta.xml</span>
<svg style="left:48px;top:725px;" width="15" height="14" viewBox="0 0 15 14"><g fill="#d0d0d0"><rect x="0" y="0" width="4" height="11"/><rect x="5" y="0" width="4" height="11"/><rect x="10" y="0" width="4" height="11"/></g><g fill="#252526"><rect x="1" y="2" width="2" height="1"/><rect x="6" y="2" width="2" height="1"/><rect x="11" y="2" width="2" height="1"/><rect x="1" y="7" width="2" height="2"/><rect x="6" y="7" width="2" height="2"/><rect x="11" y="7" width="2" height="2"/></g><path d="M2 13h4M1 13l1.200-1M1 13l1.200 1M7 13l-1.200-1M7 13l-1.200 1" stroke="#d0d0d0" stroke-width="0.900"/></svg>
<span class="t" style="top:724px;font-size:12px;line-height:16px;color:#f1f1f1;left:69px;letter-spacing:-0.264px;">ServiceData.dll</span>
<svg style="left:48px;top:742px;" width="15" height="15" viewBox="0 0 15 15"><path d="M3.500 8V0.500h6l3.500 3.500v8h-3" fill="none" stroke="#d0d0d0"/><path d="M9.500 0.500v3.500h3.500" fill="none" stroke="#d0d0d0"/><path d="M2.200 10L0.500 12l1.700 2M8.800 10l1.700 2-1.700 2" fill="none" stroke="#d0d0d0"/><rect x="3.800" y="11" width="3.400" height="2.600" fill="#d0d0d0"/><path d="M4.500 11v-1a1 1 0 0 1 2 0v1" fill="none" stroke="#d0d0d0" stroke-width="0.800"/></svg>
<span class="t" style="top:742px;font-size:12px;line-height:16px;color:#f1f1f1;left:69px;letter-spacing:0.070px;">wixpro.shop.xml</span>
</div>
<div style="left:992px;top:978px;width:768px;height:18px;background:#3e3e42;"></div>
<div style="left:992px;top:978px;width:60px;height:18px;background:#333337;border:1px solid #434346;"></div>
<span class="t" style="top:980px;font-size:10.75px;line-height:14px;color:#f1f1f1;left:994.5px;letter-spacing:-0.370px;">100 %</span>
<div style="left:1042.5px;top:985px;width:0;height:0;border-left:3.5px solid transparent;border-right:3.5px solid transparent;border-top:4px solid #999"></div>
<svg style="left:1079px;top:981px;" width="12" height="12" viewBox="0 0 12 12"><circle cx="6" cy="6" r="5.500" fill="#e51400" stroke="#f1f1f1" stroke-width="1"/><path d="M3.800 3.800l4.400 4.400M8.200 3.800l-4.400 4.400" stroke="#fff" stroke-width="1.400"/></svg>
<span class="t" style="top:979px;font-size:12px;line-height:16px;color:#f1f1f1;left:1095px;">0</span>
<svg style="left:1125px;top:981px;" width="13" height="12" viewBox="0 0 13 12"><path d="M6.500 0.500L12.500 11.500H0.500Z" fill="#ffcc00"/><path d="M6.500 4v4M6.500 9v1.500" stroke="#1e1e1e" stroke-width="1.400"/></svg>
<span class="t" style="top:979px;font-size:12px;line-height:16px;color:#f1f1f1;left:1141px;">1</span>
<svg style="left:1179px;top:982px;" width="12" height="10" viewBox="0 0 12 10"><path d="M11.500 5H1M5 0.800L0.800 5L5 9.200" fill="none" stroke="#75beff" stroke-width="1.300"/></svg>
<svg style="left:1207px;top:982px;" width="12" height="10" viewBox="0 0 12 10"><path d="M0.500 5H11M7 0.800L11.200 5L7 9.200" fill="none" stroke="#75beff" stroke-width="1.300"/></svg>
<div style="left:1234px;top:980px;width:1px;height:13px;background:#c8c8c8;"></div>
<svg style="left:1249px;top:980px;" width="11" height="13" viewBox="0 0 11 13"><path d="M8 0.500l-2 3" stroke="#c8c8c8" stroke-width="1.500"/><path d="M3 3.500l5.500 3-3.500 6-5-3z" fill="none" stroke="#c8c8c8" stroke-width="1.100"/><path d="M1.500 8.500l3 2M3 6.500l3 2" stroke="#c8c8c8"/></svg>
<div style="left:1265.5px;top:985px;width:0;height:0;border-left:3.5px solid transparent;border-right:3.5px solid transparent;border-top:4px solid #f1f1f1"></div>
<svg style="left:1302px;top:982px;" width="6" height="9" viewBox="0 0 6 9"><path d="M6 0L0 4.500L6 9z" fill="#999"/></svg>
<div style="left:1314px;top:982px;width:112px;height:10px;background:#686868;"></div>
<svg style="left:1508px;top:982px;" width="6" height="9" viewBox="0 0 6 9"><path d="M0 0L6 4.500L0 9z" fill="#999"/></svg>
<span class="t" style="top:980px;font-size:11.25px;line-height:14px;color:#f1f1f1;left:1542px;letter-spacing:-0.299px;">Стр: 23</span>
<span class="t" style="top:980px;font-size:11.5px;line-height:14px;color:#f1f1f1;left:1597px;letter-spacing:-0.338px;">Симв: 1</span>
<span class="t" style="top:979px;font-size:12px;line-height:16px;color:#f1f1f1;left:1656px;letter-spacing:-0.269px;">Пробелы</span>
<span class="t" style="top:980px;font-size:10.75px;line-height:14px;color:#f1f1f1;left:1725px;letter-spacing:-0.690px;">CRLF</span>
<div style="left:1768px;top:978px;width:145px;height:18px;background:#3e3e42;"></div>
<svg style="left:1774px;top:982px;" width="6" height="9" viewBox="0 0 6 9"><path d="M6 0L0 4.500L6 9z" fill="#999"/></svg>
<div style="left:1785px;top:982px;width:63px;height:10px;background:#686868;"></div>
<svg style="left:1901px;top:982px;" width="6" height="9" viewBox="0 0 6 9"><path d="M0 0L6 4.500L0 9z" fill="#999"/></svg>
<span class="t" style="top:1002px;font-size:12px;line-height:16px;color:#d0d0d0;left:991px;letter-spacing:0.328px;">Список ошибок</span>
<span class="t" style="top:1002px;font-size:12px;line-height:16px;color:#d0d0d0;left:1092px;letter-spacing:-0.320px;">Вывод</span>
<div style="left:991px;top:1021px;width:89px;height:6px;background:#3f3f46;"></div>
<div style="left:1092px;top:1021px;width:35px;height:6px;background:#3f3f46;"></div>
<div style="left:960px;top:1027px;width:960px;height:23px;background:#007acc;"></div>
<svg style="left:964px;top:1034px;" width="16" height="11" viewBox="0 0 16 11"><path d="M3 0.800h12l-2.500 9.400h-12z" fill="none" stroke="#fff" stroke-width="1.300"/></svg>
<span class="t" style="top:1031px;font-size:12px;line-height:16px;color:#fff;left:988px;letter-spacing:0.190px;">Готово</span>
<svg style="left:1576px;top:1033px;" width="9" height="11" viewBox="0 0 9 11"><path d="M4.500 10.500V1.500M0.800 5L4.500 1.200L8.200 5" fill="none" stroke="#fff" stroke-width="1.600"/></svg>
<span class="t" style="top:1031px;font-size:12px;line-height:16px;color:#fff;left:1595px;letter-spacing:-0.082px;">Добавить в систему управления версиями</span>
<svg style="left:1835px;top:1037px;" width="8" height="4" viewBox="0 0 8 4"><path d="M0 4L4 0L8 4z" fill="#fff"/></svg>
<svg style="left:1863px;top:1031px;" width="14" height="14" viewBox="0 0 14 14"><path d="M2 10.500c1.500-1.500 1-5 2-7a3.200 3.200 0 0 1 6 0c1 2 .5 5.500 2 7z" fill="#cfe6f7"/><circle cx="7" cy="12" r="1.500" fill="#cfe6f7"/></svg>
<div style="left:1872px;top:1036px;width:11px;height:11px;border-radius:6px;background:#e51400"></div>
<span class="t" style="top:1036px;font-size:9px;line-height:12px;color:#fff;left:1875.3px;font-weight:bold;">1</span>
<svg style="left:1908px;top:1038px;" width="8" height="8" viewBox="0 0 8 8"><g fill="#6fb4e6"><rect x="0" y="6" width="1" height="1"/><rect x="2" y="4" width="1" height="1"/><rect x="2" y="6" width="1" height="1"/><rect x="4" y="2" width="1" height="1"/><rect x="4" y="4" width="1" height="1"/><rect x="4" y="6" width="1" height="1"/><rect x="6" y="0" width="1" height="1"/><rect x="6" y="2" width="1" height="1"/><rect x="6" y="4" width="1" height="1"/><rect x="6" y="6" width="1" height="1"/></g></svg>
<div style="left:0px;top:1050px;width:1920px;height:30px;background:linear-gradient(100deg,#1d1d1d 0,#1d1d1d 46.500%,#3a3a3a 51.500%,#454545 56%,#404040 100%);"></div>
<svg style="left:10px;top:1057px;" width="16" height="16" viewBox="0 0 16 16"><path d="M0 2.300L6.600 1.400V7.600H0z M7.400 1.300L16 0V7.600H7.400z M0 8.400H6.600V14.600L0 13.700z M7.400 8.400H16V16L7.400 14.700z" fill="#fff"/></svg>
<svg style="left:46px;top:1057px;" width="17" height="17" viewBox="0 0 17 17"><circle cx="10.500" cy="6.500" r="5.300" fill="none" stroke="#fff" stroke-width="1.300"/><path d="M6.800 10.200L0.800 16.200" stroke="#fff" stroke-width="1.500"/></svg>
<svg style="left:81px;top:1056px;" width="18" height="17" viewBox="0 0 18 17"><g fill="none" stroke="#fff" stroke-width="1.300"><path d="M1.300 1v2.400h10.400v-2.400M1.300 16v-2.400h10.400v2.400"/><rect x="1.300" y="5.400" width="10.400" height="6"/><path d="M15.600 1v2.500M15.600 9.600v6.400"/></g><rect x="14.200" y="5.500" width="2.800" height="2.700" fill="#fff"/></svg>
<svg style="left:121px;top:1057px;" width="16" height="16" viewBox="0 0 16 16"><rect x="0.300" y="0.300" width="13.400" height="10.400" rx="1" fill="#d8d4c4"/><rect x="2" y="2" width="10" height="7" fill="#0a14c8"/><path d="M6.500 2h5.500v7h-4z" fill="#7fa8ff"/><path d="M9 2h3v3z" fill="#cfe0ff"/><rect x="5" y="10.700" width="4" height="1.600" fill="#b8b4a8"/><rect x="3.200" y="12.300" width="7.500" height="1.200" rx="0.600" fill="#d8d4c4"/><circle cx="11.200" cy="11.500" r="4.300" fill="#f2f2f2" stroke="#c8c8c8" stroke-width="0.500"/><path d="M8.700 10l2 1.500l-2 1.500M13.700 10l-2 1.500l2 1.500" fill="none" stroke="#1f9a1f" stroke-width="1.300"/></svg>
<svg style="left:158px;top:1057px;" width="17" height="15" viewBox="0 0 17 15"><path d="M0.500 1h5l1.500 1.500h9.500v12h-16z" fill="#e8a93a"/><path d="M0.500 4h16v10.500h-16z" fill="#ffd767"/><path d="M4 9.500h9v5h-2.500v-2.500h-4v2.500H4z" fill="#3b8be0"/></svg>
<svg style="left:195px;top:1056px;" width="16" height="17" viewBox="0 0 16 17"><path d="M5 4.500V3a3 3 0 0 1 6 0v1.500" fill="none" stroke="#e8e8e8" stroke-width="1.100"/><path d="M0.500 4.500h15v12h-15z" fill="#f5f5f5"/><rect x="4" y="7" width="3.300" height="3.300" fill="#f25022"/><rect x="8.300" y="7" width="3.300" height="3.300" fill="#7fba00"/><rect x="4" y="11.300" width="3.300" height="3.300" fill="#00a4ef"/><rect x="8.300" y="11.300" width="3.300" height="3.300" fill="#ffb900"/></svg>
<svg style="left:232px;top:1057px;" width="17" height="15" viewBox="0 0 17 15"><path d="M0 5.500L8.500 0L17 5.500V15H0z" fill="#1e7fd6"/><path d="M0 5.500L8.500 11L17 5.500V15H0z" fill="#35a7f2"/><path d="M0 5.500L8.500 11L17 5.500" fill="none" stroke="#bfe2fb" stroke-width="1"/></svg>
<svg style="left:269px;top:1057px;" width="17" height="17" viewBox="0 0 17 17"><defs><linearGradient id="eg" x1="0" y1="0" x2="1" y2="1"><stop offset="0" stop-color="#35c1b1"/><stop offset="0.500" stop-color="#1f9ede"/><stop offset="1" stop-color="#0c59a4"/></linearGradient></defs><circle cx="8.500" cy="8.500" r="8.200" fill="url(#eg)"/><path d="M3 12C2 7 6 4 9.500 4.500C13 5 14.500 8 13.500 10H8C8 12.500 11 14 14 12.500C12 16 6 16.500 3 12z" fill="#0b4a94"/><path d="M1 7C3 2 9 0 13.500 3C16 5 16.500 8 15.500 10H13.500C14.500 6 11 4 8.500 4.500C5 5 3.500 7.500 3 10z" fill="#5fd48a" opacity=".85"/></svg>
<svg style="left:306px;top:1057px;" width="17" height="17" viewBox="0 0 17 17"><circle cx="8.500" cy="8.500" r="8.300" fill="#1b3a68"/><path d="M0.500 9.500L6 12A2.300 2.300 0 0 0 10 11L13 9" fill="none" stroke="#e8eef6" stroke-width="2"/><circle cx="12" cy="6" r="2.800" fill="none" stroke="#e8eef6" stroke-width="1.500"/><circle cx="7" cy="12" r="1.800" fill="none" stroke="#e8eef6" stroke-width="1.200"/></svg>
<svg style="left:343px;top:1057px;" width="16" height="16" viewBox="0 0 16 16"><rect width="16" height="16" fill="#c8d8ee"/><rect x="0" y="0" width="16" height="3" fill="#d03a3a"/><rect x="4" y="3" width="8" height="8" fill="#c89070"/><rect x="3" y="2" width="10" height="3" fill="#4a2a1a"/><rect x="4" y="6" width="8" height="1.500" fill="#222"/><rect x="0" y="11" width="16" height="5" fill="#d04040"/><rect x="0" y="5" width="3" height="6" fill="#3a6ad0"/><rect x="13" y="5" width="3" height="6" fill="#3a6ad0"/></svg>
<svg style="left:380px;top:1058px;" width="17" height="15" viewBox="0 0 17 15"><path d="M0 0h4.500L8.500 10L12.500 0H17L10.500 15H6.500z" fill="#6a8f4a"/><path d="M2 1h2L8.500 12L13 1h2L9.800 14H7.200z" fill="#2a3a22"/></svg>
<svg style="left:417px;top:1056px;" width="17" height="17" viewBox="0 0 17 17"><path d="M1 2.500h12v14H1z" fill="#f4f4f0" stroke="#b0b0a0" stroke-width="0.600"/><path d="M2.500 2.500v-1.500M4.500 2.500v-1.500M6.500 2.500v-1.500M8.500 2.500v-1.500M10.500 2.500v-1.500" stroke="#555" stroke-width="0.800"/><path d="M3 6h8M3 8h8M3 10h6" stroke="#9ab" stroke-width="0.800"/><path d="M15.500 2L7 12.500L5.500 15L8.300 13.800L16.500 3.200z" fill="#8fd33a" stroke="#4a7a1a" stroke-width="0.500"/><path d="M2 11h9v5H2z" fill="#d8f06a" opacity=".7"/></svg>
<svg style="left:454px;top:1057px;" width="16" height="17" viewBox="0 0 16 17"><path d="M0.500 2.500a2 2 0 0 1 2-2h11a2 2 0 0 1 2 2v14.300l-3.500-3H2.500a2 2 0 0 1-2-2z" fill="#7289da"/><path d="M3.500 10.500C3.500 7 5 4.500 5 4.500c1.500-.8 3-.8 3-.8s1.500 0 3 .8c0 0 1.500 2.500 1.500 6c-1 1-2.500 1.200-2.500 1.200l-.6-.9H6.600l-.6.900S4.500 11.500 3.500 10.500z" fill="#fff"/><ellipse cx="6.300" cy="8.300" rx="1" ry="1.200" fill="#7289da"/><ellipse cx="9.700" cy="8.300" rx="1" ry="1.200" fill="#7289da"/></svg>
<svg style="left:491px;top:1057px;" width="17" height="17" viewBox="0 0 17 17"><circle cx="8.500" cy="8.500" r="8.300" fill="#fbc116"/><path d="M8.500 8.500L1.300 4.400A8.300 8.300 0 0 1 15.700 4.400z" fill="#e33b2e"/><path d="M8.500 8.500L1.300 4.400A8.300 8.300 0 0 0 8 16.800L12 9z" fill="#2da94f"/><path d="M8.500 4.400h7.200" stroke="#e33b2e" stroke-width="0.100"/><circle cx="8.500" cy="8.500" r="3.800" fill="#fff"/><circle cx="8.500" cy="8.500" r="3" fill="#4285f4"/></svg>
<div style="left:528px;top:1057px;width:17px;height:16px;background:#001e36;border:1px solid #31c5f0;border-radius:2px;"></div>
<span class="t" style="top:1060px;font-size:8.75px;line-height:12px;color:#c8ecfb;left:531.5px;font-weight:bold;letter-spacing:-0.702px;">Ps</span>
<div style="left:565px;top:1057px;width:17px;height:16px;background:#2f333d;border-radius:2px;"></div>
<span class="t" style="left:566px;top:1060px;font-size:9px;line-height:10px;color:#4a8fe0;font-weight:bold;letter-spacing:-0.500px;transform:scaleX(.85);transform-origin:left">m</span>
<span class="t" style="left:572.500px;top:1059.200px;font-size:10px;line-height:11px;color:#b8b8b8;font-weight:bold">R</span>
<svg style="left:602px;top:1056px;" width="17" height="18" viewBox="0 0 17 18"><path d="M3 3h12l-2 14H1z" fill="#bfe6f2" stroke="#7ab0c0" stroke-width="0.600"/><path d="M4 2v2M6 2v2M8 2v2M10 2v2M12 2v2M14 2v2" stroke="#dfeff5" stroke-width="1"/><path d="M11 12l3.500 0L12.500 17H10z" fill="#f0e8c0" opacity=".8"/></svg>
<div style="left:629px;top:1050px;width:36px;height:30px;background:rgba(255,255,255,0.17);"></div>
<svg style="left:639px;top:1057px;" width="17" height="17" viewBox="0 0 17 17"><path d="M12.200 0L17 2.200V14.800L12.200 17L4.800 9.900L1.700 12.600L0 11.700V5.300L1.700 4.400L4.800 7.100Z M12.400 4.900L8 8.500L12.400 12.100Z M1.800 6.700V10.300L3.600 8.500Z" fill="#a074e8" fill-rule="evenodd"/></svg>
<div style="left:152.0px;top:1078px;width:28px;height:2px;background:#9a9a9a;"></div>
<div style="left:226.0px;top:1078px;width:28px;height:2px;background:#9a9a9a;"></div>
<div style="left:300.0px;top:1078px;width:28px;height:2px;background:#9a9a9a;"></div>
<div style="left:411.0px;top:1078px;width:28px;height:2px;background:#9a9a9a;"></div>
<div style="left:448.0px;top:1078px;width:28px;height:2px;background:#9a9a9a;"></div>
<div style="left:485.0px;top:1078px;width:28px;height:2px;background:#9a9a9a;"></div>
<div style="left:522.0px;top:1078px;width:28px;height:2px;background:#9a9a9a;"></div>
<div style="left:559.0px;top:1078px;width:28px;height:2px;background:#9a9a9a;"></div>
<div style="left:596.0px;top:1078px;width:28px;height:2px;background:#9a9a9a;"></div>
<div style="left:629.0px;top:1078px;width:36px;height:2px;background:#9a9a9a;"></div>
<svg style="left:1797px;top:1061px;" width="13" height="8" viewBox="0 0 13 8"><path d="M0.700 7.300L6.500 1.300L12.300 7.300" fill="none" stroke="#fff" stroke-width="1.300"/></svg>
<svg style="left:1819px;top:1058px;" width="18" height="14" viewBox="0 0 18 14"><path d="M1 5h2.500L7 1.500v11L3.500 9H1z" fill="none" stroke="#fff" stroke-width="1.100"/><path d="M9 5a3 3 0 0 1 0 4M11 3a6 6 0 0 1 0 8M13.500 1.500a9 9 0 0 1 0 11" fill="none" stroke="#fff" stroke-width="1.100"/></svg>
<span class="t" style="top:1057px;font-size:12.5px;line-height:16px;color:#fff;left:1847.5px;transform:scaleX(0.8589);transform-origin:left;">РУС</span>
<span class="t" style="top:1057px;font-size:12.5px;line-height:16px;color:#fff;left:1885px;transform:scaleX(0.8633);transform-origin:left;">4:38</span>
<div style="left:1915px;top:1050px;width:1px;height:30px;background:#8a8a8a;"></div>
</div></body></html>
